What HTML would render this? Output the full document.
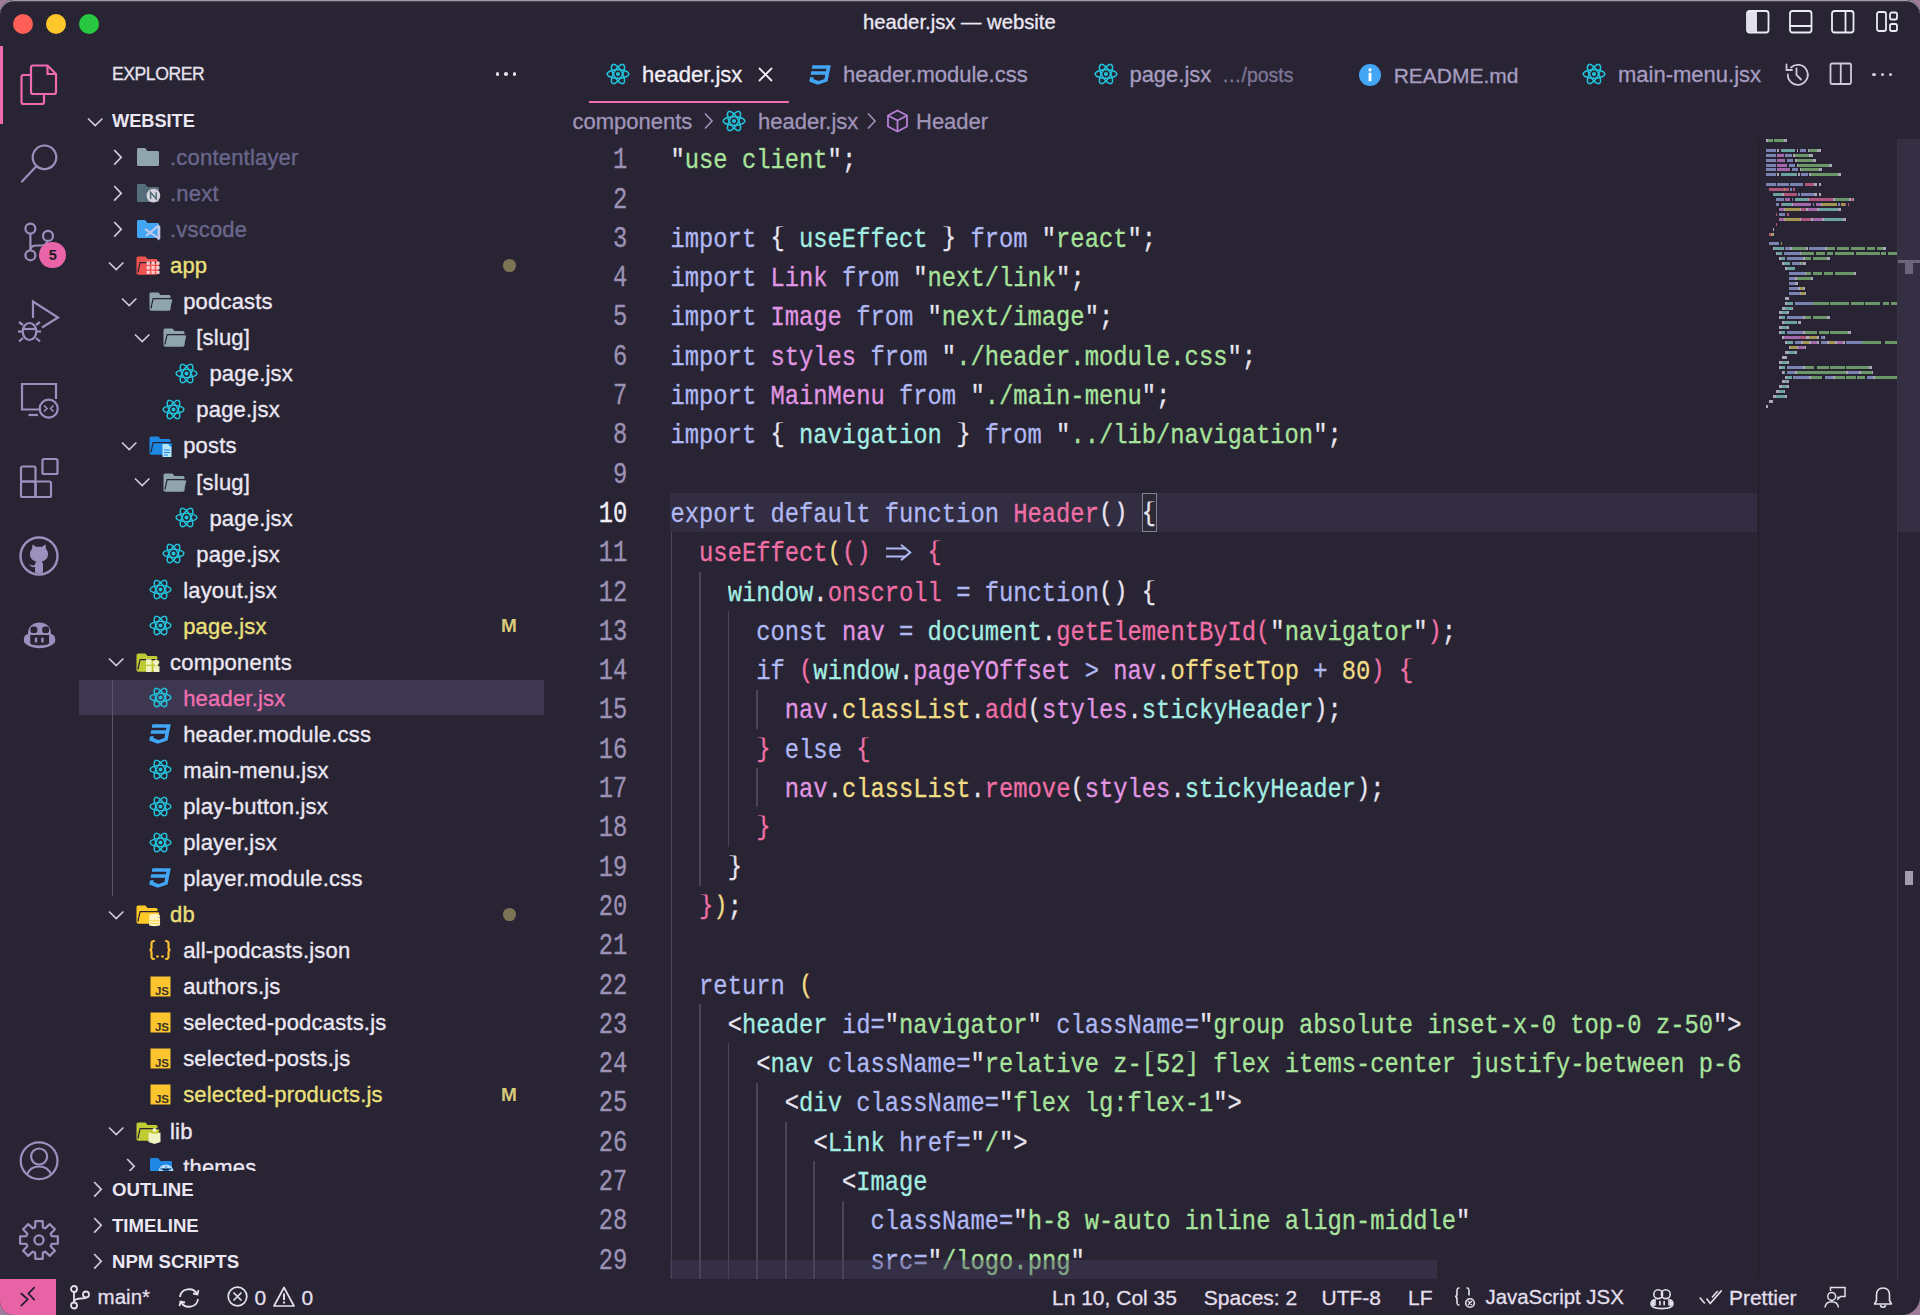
<!DOCTYPE html><html><head><meta charset="utf-8"><style>
html,body{margin:0;padding:0;width:1920px;height:1315px;overflow:hidden;background:#9e7d98;}
#win{position:absolute;left:0;top:0;width:1920px;height:1315px;background:#292434;border-radius:14px 14px 18px 14px;overflow:hidden;}
.t{position:absolute;white-space:pre;line-height:1;font-family:"Liberation Sans",sans-serif;}
.m{position:absolute;white-space:pre;font-family:"Liberation Mono",monospace;font-size:23.813px;line-height:1;transform-origin:0 18.24px;transform:scaleY(1.14);-webkit-text-stroke-width:0.25px;}
.ln{transform:scaleY(1.24);}
svg{position:absolute;overflow:visible;}
.r{position:absolute;}
</style></head><body>
<div id="win">

<div class="r" style="left:0;top:0;width:1920px;height:40px;border-radius:14px 14px 0 0;box-shadow:inset 0 1.2px 0 #a39daa"></div>
<div class="r" style="left:12.5px;top:13.6px;width:20.4px;height:20.4px;border-radius:50%;background:#fe5f57"></div>
<div class="r" style="left:45.5px;top:13.6px;width:20.4px;height:20.4px;border-radius:50%;background:#fdc62a"></div>
<div class="r" style="left:78.5px;top:13.6px;width:20.4px;height:20.4px;border-radius:50%;background:#28c840"></div>
<div class="t" style="left:863px;top:12.01px;font-size:20.3px;color:#ece8f4;font-weight:normal;letter-spacing:0px;-webkit-text-stroke:0.3px #ece8f4;">header.jsx — website</div>
<svg style="left:1746px;top:10px" width="24" height="24" viewBox="0 0 24 24"><rect x="1" y="1" width="21.5" height="21.5" rx="2.5" fill="none" stroke="#ecebf5" stroke-width="1.8"/><rect x="1.8" y="1.8" width="8" height="20" fill="#ecebf5" opacity="0.95"/><line x1="10" y1="1" x2="10" y2="22.5" stroke="#ecebf5" stroke-width="1.8"/></svg>
<svg style="left:1789px;top:10px" width="24" height="24" viewBox="0 0 24 24"><rect x="1" y="1" width="21.5" height="21.5" rx="2.5" fill="none" stroke="#ecebf5" stroke-width="1.8"/><line x1="1" y1="16" x2="22.5" y2="16" stroke="#ecebf5" stroke-width="1.8"/></svg>
<svg style="left:1831px;top:10px" width="24" height="24" viewBox="0 0 24 24"><rect x="1" y="1" width="21.5" height="21.5" rx="2.5" fill="none" stroke="#ecebf5" stroke-width="1.8"/><line x1="14.5" y1="1" x2="14.5" y2="22.5" stroke="#ecebf5" stroke-width="1.8"/></svg>
<svg style="left:1876px;top:10px" width="24" height="24" viewBox="0 0 24 24"><rect x="1" y="2" width="9" height="19" rx="2" fill="none" stroke="#ecebf5" stroke-width="1.8"/><rect x="14" y="2.5" width="7" height="7" rx="1.8" fill="none" stroke="#ecebf5" stroke-width="1.8"/><rect x="14" y="14" width="7" height="7" rx="1.8" fill="none" stroke="#ecebf5" stroke-width="1.8"/></svg>
<div class="r" style="left:0;top:46px;width:3px;height:78px;background:#f06ab0"></div>
<svg style="left:20px;top:63px" width="38" height="44" viewBox="0 0 38 44"><g fill="none" stroke="#f06ab0" stroke-width="2.2" stroke-linejoin="round">
<path d="M11.5 12 H3.5 a2 2 0 0 0 -2 2 V39 a2 2 0 0 0 2 2 H22 a2 2 0 0 0 2 -2 V32"/>
<path d="M13 2.5 H27.5 L36 11 V29 a2 2 0 0 1 -2 2 H13 a2 2 0 0 1 -2 -2 V4.5 a2 2 0 0 1 2 -2 Z"/>
<path d="M27.5 2.5 V11 H36"/></g></svg>
<svg style="left:18px;top:140px" width="44" height="46" viewBox="0 0 44 46"><g fill="none" stroke="#9b90bd" stroke-width="2.2" stroke-linecap="round"><circle cx="26.5" cy="17.3" r="11.8"/><line x1="18.5" y1="26" x2="4" y2="41.5"/></g></svg>
<svg style="left:20px;top:218px" width="44" height="50" viewBox="0 0 44 50"><g fill="none" stroke="#9b90bd" stroke-width="2.2"><circle cx="10.4" cy="10.6" r="5"/><circle cx="28" cy="17.9" r="5"/><circle cx="10.4" cy="37.3" r="5"/><line x1="10.4" y1="15.6" x2="10.4" y2="32.3"/><path d="M10.4 31 C11 28.5 13 27.5 17 27.5 H22 C24.5 27.5 26.5 25.5 27.5 22.9"/></g></svg>
<div class="r" style="left:39.4px;top:242.2px;width:26.2px;height:26.2px;border-radius:50%;background:#e964a8"></div>
<div class="t" style="left:39.6px;width:26.2px;text-align:center;top:247.92px;font-size:14.5px;color:#1e1a26;font-weight:bold">5</div>
<svg style="left:16px;top:298px" width="48" height="46" viewBox="0 0 48 46"><g fill="none" stroke="#9b90bd" stroke-width="2.2" stroke-linejoin="miter">
<path d="M17 20 V3.5 L42 19.5 L26 29.5"/>
<ellipse cx="13.5" cy="33.5" rx="6.8" ry="8.5"/><line x1="7" y1="31" x2="20" y2="31"/>
<line x1="6.5" y1="33.5" x2="2" y2="33.5"/><line x1="20.5" y1="33.5" x2="25" y2="33.5"/>
<line x1="7" y1="27" x2="3" y2="24"/><line x1="20" y1="27" x2="24" y2="24"/>
<line x1="7" y1="40" x2="3" y2="43.5"/><line x1="20" y1="40" x2="24" y2="43.5"/></g></svg>
<svg style="left:18px;top:380px" width="44" height="40" viewBox="0 0 44 40"><g fill="none" stroke="#9b90bd" stroke-width="2.2">
<path d="M23 29.5 H4 V4 H38 V19"/><line x1="10.5" y1="35" x2="20" y2="35"/><circle cx="30.7" cy="28.7" r="9"/>
<path d="M26 25.5 L29 28.5 L26 31.5 M35.5 25.5 L32.5 28.5 L35.5 31.5" stroke-width="1.6"/></g></svg>
<svg style="left:18px;top:456px" width="44" height="44" viewBox="0 0 44 44"><g fill="none" stroke="#9b90bd" stroke-width="2.2">
<rect x="3" y="10.5" width="14.5" height="15" rx="1.5"/><rect x="3" y="25.5" width="14.5" height="15.5" rx="1.5"/><rect x="17.5" y="25.5" width="15.5" height="15.5" rx="1.5"/><rect x="24.5" y="3" width="15" height="15" rx="1.5"/></g></svg>
<svg style="left:18px;top:535px" width="44" height="44" viewBox="0 0 44 44"><circle cx="21" cy="21" r="18.5" fill="none" stroke="#9b90bd" stroke-width="2.4"/>
<path d="M14 14 L14.5 9.5 L18.5 12 C20 11.6 22 11.6 23.5 12 L27.5 9.5 L28 14 C29.5 15.5 30 17 30 19 C30 23.5 27 26 23.5 26.5 C24.5 27.5 25 28.5 25 30 V37.5 C23.8 38 22.5 38.2 21 38.2 C19.5 38.2 18.2 38 17 37.5 V32 C15 32.5 12.5 32 11 29 C12.5 29.5 13.5 30.5 15 30.5 L17 30 C17 28.5 17.5 27.3 18.5 26.5 C15 26 12 23.5 12 19 C12 17 12.5 15.5 14 14 Z" fill="#9b90bd"/></svg>
<svg style="left:21px;top:619px" width="38" height="34" viewBox="0 0 38 34"><path d="M7 15 C7 7.5 12 3.6 18.5 3.6 C25 3.6 30 7.5 30 15 C33 15.5 34.3 18 34.3 21 C34.3 23.5 33 25 30 26.5 C26.5 28.3 22.5 29.2 18.5 29.2 C14.5 29.2 10.5 28.3 7 26.5 C4 25 2.8 23.5 2.8 21 C2.8 18 4 15.5 7 15 Z" fill="#9b90bd"/><g fill="#292434"><rect x="9.5" y="7.4" width="6.8" height="6.6" rx="2.6"/><rect x="21.2" y="7.4" width="6.9" height="6.6" rx="2.6"/><path d="M9.2 15.9 H28.1 V24 C28.1 25.6 24 26.4 18.6 26.4 C13.3 26.4 9.2 25.6 9.2 24 Z"/></g><g fill="#9b90bd"><rect x="13.8" y="18.5" width="2.4" height="5.1" rx="1.2"/><rect x="20.2" y="18.5" width="2.4" height="5.1" rx="1.2"/></g></svg>
<svg style="left:18px;top:1139px" width="44" height="44" viewBox="0 0 44 44"><g fill="none" stroke="#9b90bd" stroke-width="2.2"><circle cx="21.1" cy="21.7" r="18.4"/><circle cx="21.1" cy="17.5" r="8"/><path d="M9 36 C11 30 15.5 27.5 21.1 27.5 C26.7 27.5 31.2 30 33.2 36"/></g></svg>
<svg style="left:18px;top:1219px" width="44" height="44" viewBox="0 0 44 44"><g fill="none" stroke="#9b90bd" stroke-width="2.2" stroke-linejoin="round"><polygon points="17.10,8.39 17.37,2.15 24.63,2.15 24.90,8.39 27.16,9.32 31.77,5.10 36.90,10.23 32.68,14.84 33.61,17.10 39.85,17.37 39.85,24.63 33.61,24.90 32.68,27.16 36.90,31.77 31.77,36.90 27.16,32.68 24.90,33.61 24.63,39.85 17.37,39.85 17.10,33.61 14.84,32.68 10.23,36.90 5.10,31.77 9.32,27.16 8.39,24.90 2.15,24.63 2.15,17.37 8.39,17.10 9.32,14.84 5.10,10.23 10.23,5.10 14.84,9.32"/><circle cx="21" cy="21" r="4.6"/></g></svg>
<div class="t" style="left:112px;top:66.40px;font-size:17.6px;color:#e6e2ee;font-weight:normal;letter-spacing:-0.45px;-webkit-text-stroke:0.3px #e6e2ee;">EXPLORER</div>
<div class="r" style="left:495.7px;top:72.2px;width:3.6px;height:3.6px;border-radius:50%;background:#e2deea"></div>
<div class="r" style="left:504.2px;top:72.2px;width:3.6px;height:3.6px;border-radius:50%;background:#e2deea"></div>
<div class="r" style="left:512.7px;top:72.2px;width:3.6px;height:3.6px;border-radius:50%;background:#e2deea"></div>
<svg style="left:87px;top:116.5px" width="17" height="10" viewBox="0 0 17 10"><path d="M1 1.5 L8.2 8.5 L15.4 1.5" fill="none" stroke="#cfcadb" stroke-width="1.7"/></svg>
<div class="t" style="left:112px;top:112.39px;font-size:18.2px;color:#ebe7f3;font-weight:bold;letter-spacing:0px;">WEBSITE</div>
<div class="r" style="left:78px;top:139px;width:480px;height:1032px;overflow:hidden">
<div class="r" style="left:1px;top:540.5px;width:465px;height:35.8px;background:#3d3751"></div>
<div class="r" style="left:33.5px;top:541px;width:1.8px;height:216px;background:#5a5668"></div>
<svg style="left:34.50px;top:9.50px" width="10" height="17" viewBox="0 0 10 17"><path d="M1.2 1 L8.2 8.3 L1.2 15.6" fill="none" stroke="#cfcadb" stroke-width="1.7"/></svg>
<svg style="left:58.30px;top:8.00px" width="24" height="20" viewBox="0 0 24 20"><path d="M9 1 H2.5 C1.6 1 1 1.6 1 2.5 V17.5 C1 18.4 1.6 19 2.5 19 H21.5 C22.4 19 23 18.4 23 17.5 V5.5 C23 4.6 22.4 4 21.5 4 H11.5 Z" fill="#90a4ae"/></svg>
<div class="t" style="left:92.00px;top:8.02px;font-size:22px;color:#6a678c;font-weight:normal;letter-spacing:0.2px;-webkit-text-stroke:0.35px #6a678c;">.contentlayer</div>
<svg style="left:34.50px;top:45.56px" width="10" height="17" viewBox="0 0 10 17"><path d="M1.2 1 L8.2 8.3 L1.2 15.6" fill="none" stroke="#cfcadb" stroke-width="1.7"/></svg>
<svg style="left:58.30px;top:44.06px" width="24" height="20" viewBox="0 0 24 20"><path d="M9 1 H2.5 C1.6 1 1 1.6 1 2.5 V17.5 C1 18.4 1.6 19 2.5 19 H21.5 C22.4 19 23 18.4 23 17.5 V5.5 C23 4.6 22.4 4 21.5 4 H11.5 Z" fill="#546e7a"/><circle cx="17.4" cy="12.6" r="6.9" fill="#d7d3dc"/><path d="M14.6 16 V9.3 L20.2 16 V9.3" fill="none" stroke="#546e7a" stroke-width="1.5"/></svg>
<div class="t" style="left:92.00px;top:44.08px;font-size:22px;color:#6a678c;font-weight:normal;letter-spacing:0.2px;-webkit-text-stroke:0.35px #6a678c;">.next</div>
<svg style="left:34.50px;top:81.61px" width="10" height="17" viewBox="0 0 10 17"><path d="M1.2 1 L8.2 8.3 L1.2 15.6" fill="none" stroke="#cfcadb" stroke-width="1.7"/></svg>
<svg style="left:58.30px;top:80.11px" width="24" height="20" viewBox="0 0 24 20"><path d="M9 1 H2.5 C1.6 1 1 1.6 1 2.5 V17.5 C1 18.4 1.6 19 2.5 19 H21.5 C22.4 19 23 18.4 23 17.5 V5.5 C23 4.6 22.4 4 21.5 4 H11.5 Z" fill="#42a5f5"/><path d="M9 10.2 L23 19.5 M10 17.1 L22.6 6.6" stroke="#c5cae9" stroke-width="2" fill="none"/><path d="M21.6 5.6 L24.3 7 V20 L21.6 21.4 Z" fill="#c5cae9"/></svg>
<div class="t" style="left:92.00px;top:80.13px;font-size:22px;color:#6a678c;font-weight:normal;letter-spacing:0.2px;-webkit-text-stroke:0.35px #6a678c;">.vscode</div>
<svg style="left:30.00px;top:121.67px" width="17" height="10" viewBox="0 0 17 10"><path d="M1 1.5 L8.2 8.5 L15.4 1.5" fill="none" stroke="#cfcadb" stroke-width="1.7"/></svg>
<svg style="left:58.30px;top:117.17px" width="24" height="19" viewBox="0 0 24 19"><path d="M2 0.5 H9.5 L11.5 3 H20 A1.5 1.5 0 0 1 21.5 4.5 V17 A1.5 1.5 0 0 1 20 18.5 H2 A1.5 1.5 0 0 1 0.5 17 V2 A1.5 1.5 0 0 1 2 0.5 Z" fill="#ef5350"/><path d="M23.6 6.8 H4.2 L2 16.5" fill="none" stroke="#292434" stroke-width="1.4"/><path d="M4.6 7.6 H23.4 L21 17.3 A1.6 1.6 0 0 1 19.5 18.5 H2.2 Z" fill="#ef5350"/><g fill="#ffcdd2"><rect x="10.6" y="5.5" width="3.3" height="3.3" rx="0.5"/><rect x="10.6" y="10.1" width="3.3" height="3.3" rx="0.5"/><rect x="10.6" y="14.7" width="3.3" height="3.3" rx="0.5"/><rect x="15.399999999999999" y="5.5" width="3.3" height="3.3" rx="0.5"/><rect x="15.399999999999999" y="10.1" width="3.3" height="3.3" rx="0.5"/><rect x="15.399999999999999" y="14.7" width="3.3" height="3.3" rx="0.5"/><rect x="20.2" y="5.5" width="3.3" height="3.3" rx="0.5"/><rect x="20.2" y="10.1" width="3.3" height="3.3" rx="0.5"/><rect x="20.2" y="14.7" width="3.3" height="3.3" rx="0.5"/></g></svg>
<div class="t" style="left:92.00px;top:116.19px;font-size:22px;color:#ece07a;font-weight:normal;letter-spacing:0.2px;-webkit-text-stroke:0.35px #ece07a;">app</div>
<div class="r" style="left:424.90px;top:120.07px;width:12.8px;height:12.8px;border-radius:50%;background:#7d7456"></div>
<svg style="left:43.20px;top:157.72px" width="17" height="10" viewBox="0 0 17 10"><path d="M1 1.5 L8.2 8.5 L15.4 1.5" fill="none" stroke="#cfcadb" stroke-width="1.7"/></svg>
<svg style="left:71.45px;top:153.22px" width="24" height="19" viewBox="0 0 24 19"><path d="M2 0.5 H9.5 L11.5 3 H20 A1.5 1.5 0 0 1 21.5 4.5 V17 A1.5 1.5 0 0 1 20 18.5 H2 A1.5 1.5 0 0 1 0.5 17 V2 A1.5 1.5 0 0 1 2 0.5 Z" fill="#90a4ae"/><path d="M23.6 6.8 H4.2 L2 16.5" fill="none" stroke="#292434" stroke-width="1.4"/><path d="M4.6 7.6 H23.4 L21 17.3 A1.6 1.6 0 0 1 19.5 18.5 H2.2 Z" fill="#90a4ae"/></svg>
<div class="t" style="left:105.15px;top:152.25px;font-size:22px;color:#ebe7f3;font-weight:normal;letter-spacing:0.2px;-webkit-text-stroke:0.35px #ebe7f3;">podcasts</div>
<svg style="left:56.40px;top:193.78px" width="17" height="10" viewBox="0 0 17 10"><path d="M1 1.5 L8.2 8.5 L15.4 1.5" fill="none" stroke="#cfcadb" stroke-width="1.7"/></svg>
<svg style="left:84.60px;top:189.28px" width="24" height="19" viewBox="0 0 24 19"><path d="M2 0.5 H9.5 L11.5 3 H20 A1.5 1.5 0 0 1 21.5 4.5 V17 A1.5 1.5 0 0 1 20 18.5 H2 A1.5 1.5 0 0 1 0.5 17 V2 A1.5 1.5 0 0 1 2 0.5 Z" fill="#90a4ae"/><path d="M23.6 6.8 H4.2 L2 16.5" fill="none" stroke="#292434" stroke-width="1.4"/><path d="M4.6 7.6 H23.4 L21 17.3 A1.6 1.6 0 0 1 19.5 18.5 H2.2 Z" fill="#90a4ae"/></svg>
<div class="t" style="left:118.30px;top:188.30px;font-size:22px;color:#ebe7f3;font-weight:normal;letter-spacing:0.2px;-webkit-text-stroke:0.35px #ebe7f3;">[slug]</div>
<svg style="left:97.25px;top:222.84px" width="23" height="23" viewBox="0 0 24 24"><g fill="none" stroke="#22c2da" stroke-width="1.55"><ellipse cx="12" cy="12" rx="10.8" ry="4.3"/><ellipse cx="12" cy="12" rx="10.8" ry="4.3" transform="rotate(60 12 12)"/><ellipse cx="12" cy="12" rx="10.8" ry="4.3" transform="rotate(120 12 12)"/></g><circle cx="12" cy="12" r="2.1" fill="#22c2da"/></svg>
<div class="t" style="left:131.45px;top:224.36px;font-size:22px;color:#ebe7f3;font-weight:normal;letter-spacing:0.2px;-webkit-text-stroke:0.35px #ebe7f3;">page.jsx</div>
<svg style="left:84.10px;top:258.89px" width="23" height="23" viewBox="0 0 24 24"><g fill="none" stroke="#22c2da" stroke-width="1.55"><ellipse cx="12" cy="12" rx="10.8" ry="4.3"/><ellipse cx="12" cy="12" rx="10.8" ry="4.3" transform="rotate(60 12 12)"/><ellipse cx="12" cy="12" rx="10.8" ry="4.3" transform="rotate(120 12 12)"/></g><circle cx="12" cy="12" r="2.1" fill="#22c2da"/></svg>
<div class="t" style="left:118.30px;top:260.41px;font-size:22px;color:#ebe7f3;font-weight:normal;letter-spacing:0.2px;-webkit-text-stroke:0.35px #ebe7f3;">page.jsx</div>
<svg style="left:43.20px;top:301.95px" width="17" height="10" viewBox="0 0 17 10"><path d="M1 1.5 L8.2 8.5 L15.4 1.5" fill="none" stroke="#cfcadb" stroke-width="1.7"/></svg>
<svg style="left:71.45px;top:297.45px" width="24" height="19" viewBox="0 0 24 19"><path d="M2 0.5 H9.5 L11.5 3 H20 A1.5 1.5 0 0 1 21.5 4.5 V17 A1.5 1.5 0 0 1 20 18.5 H2 A1.5 1.5 0 0 1 0.5 17 V2 A1.5 1.5 0 0 1 2 0.5 Z" fill="#1e88e5"/><path d="M23.6 6.8 H4.2 L2 16.5" fill="none" stroke="#292434" stroke-width="1.4"/><path d="M4.6 7.6 H23.4 L21 17.3 A1.6 1.6 0 0 1 19.5 18.5 H2.2 Z" fill="#1e88e5"/><path d="M13.5 8 H19 L22.5 11.5 V21 H13.5 Z" fill="#b3e5fc"/><path d="M15 14 H21 M15 16.5 H21 M15 19 H19" stroke="#1e88e5" stroke-width="1"/></svg>
<div class="t" style="left:105.15px;top:296.47px;font-size:22px;color:#ebe7f3;font-weight:normal;letter-spacing:0.2px;-webkit-text-stroke:0.35px #ebe7f3;">posts</div>
<svg style="left:56.40px;top:338.00px" width="17" height="10" viewBox="0 0 17 10"><path d="M1 1.5 L8.2 8.5 L15.4 1.5" fill="none" stroke="#cfcadb" stroke-width="1.7"/></svg>
<svg style="left:84.60px;top:333.50px" width="24" height="19" viewBox="0 0 24 19"><path d="M2 0.5 H9.5 L11.5 3 H20 A1.5 1.5 0 0 1 21.5 4.5 V17 A1.5 1.5 0 0 1 20 18.5 H2 A1.5 1.5 0 0 1 0.5 17 V2 A1.5 1.5 0 0 1 2 0.5 Z" fill="#90a4ae"/><path d="M23.6 6.8 H4.2 L2 16.5" fill="none" stroke="#292434" stroke-width="1.4"/><path d="M4.6 7.6 H23.4 L21 17.3 A1.6 1.6 0 0 1 19.5 18.5 H2.2 Z" fill="#90a4ae"/></svg>
<div class="t" style="left:118.30px;top:332.53px;font-size:22px;color:#ebe7f3;font-weight:normal;letter-spacing:0.2px;-webkit-text-stroke:0.35px #ebe7f3;">[slug]</div>
<svg style="left:97.25px;top:367.06px" width="23" height="23" viewBox="0 0 24 24"><g fill="none" stroke="#22c2da" stroke-width="1.55"><ellipse cx="12" cy="12" rx="10.8" ry="4.3"/><ellipse cx="12" cy="12" rx="10.8" ry="4.3" transform="rotate(60 12 12)"/><ellipse cx="12" cy="12" rx="10.8" ry="4.3" transform="rotate(120 12 12)"/></g><circle cx="12" cy="12" r="2.1" fill="#22c2da"/></svg>
<div class="t" style="left:131.45px;top:368.58px;font-size:22px;color:#ebe7f3;font-weight:normal;letter-spacing:0.2px;-webkit-text-stroke:0.35px #ebe7f3;">page.jsx</div>
<svg style="left:84.10px;top:403.12px" width="23" height="23" viewBox="0 0 24 24"><g fill="none" stroke="#22c2da" stroke-width="1.55"><ellipse cx="12" cy="12" rx="10.8" ry="4.3"/><ellipse cx="12" cy="12" rx="10.8" ry="4.3" transform="rotate(60 12 12)"/><ellipse cx="12" cy="12" rx="10.8" ry="4.3" transform="rotate(120 12 12)"/></g><circle cx="12" cy="12" r="2.1" fill="#22c2da"/></svg>
<div class="t" style="left:118.30px;top:404.64px;font-size:22px;color:#ebe7f3;font-weight:normal;letter-spacing:0.2px;-webkit-text-stroke:0.35px #ebe7f3;">page.jsx</div>
<svg style="left:70.95px;top:439.17px" width="23" height="23" viewBox="0 0 24 24"><g fill="none" stroke="#22c2da" stroke-width="1.55"><ellipse cx="12" cy="12" rx="10.8" ry="4.3"/><ellipse cx="12" cy="12" rx="10.8" ry="4.3" transform="rotate(60 12 12)"/><ellipse cx="12" cy="12" rx="10.8" ry="4.3" transform="rotate(120 12 12)"/></g><circle cx="12" cy="12" r="2.1" fill="#22c2da"/></svg>
<div class="t" style="left:105.15px;top:440.69px;font-size:22px;color:#ebe7f3;font-weight:normal;letter-spacing:0.2px;-webkit-text-stroke:0.35px #ebe7f3;">layout.jsx</div>
<svg style="left:70.95px;top:475.23px" width="23" height="23" viewBox="0 0 24 24"><g fill="none" stroke="#22c2da" stroke-width="1.55"><ellipse cx="12" cy="12" rx="10.8" ry="4.3"/><ellipse cx="12" cy="12" rx="10.8" ry="4.3" transform="rotate(60 12 12)"/><ellipse cx="12" cy="12" rx="10.8" ry="4.3" transform="rotate(120 12 12)"/></g><circle cx="12" cy="12" r="2.1" fill="#22c2da"/></svg>
<div class="t" style="left:105.15px;top:476.75px;font-size:22px;color:#ece07a;font-weight:normal;letter-spacing:0.2px;-webkit-text-stroke:0.35px #ece07a;">page.jsx</div>
<div class="t" style="left:423.00px;top:477.44px;font-size:19px;color:#d9cb7a;font-weight:bold;letter-spacing:0px;">M</div>
<svg style="left:30.00px;top:518.28px" width="17" height="10" viewBox="0 0 17 10"><path d="M1 1.5 L8.2 8.5 L15.4 1.5" fill="none" stroke="#cfcadb" stroke-width="1.7"/></svg>
<svg style="left:58.30px;top:513.78px" width="24" height="19" viewBox="0 0 24 19"><path d="M2 0.5 H9.5 L11.5 3 H20 A1.5 1.5 0 0 1 21.5 4.5 V17 A1.5 1.5 0 0 1 20 18.5 H2 A1.5 1.5 0 0 1 0.5 17 V2 A1.5 1.5 0 0 1 2 0.5 Z" fill="#c0ca33"/><path d="M23.6 6.8 H4.2 L2 16.5" fill="none" stroke="#292434" stroke-width="1.4"/><path d="M4.6 7.6 H23.4 L21 17.3 A1.6 1.6 0 0 1 19.5 18.5 H2.2 Z" fill="#c0ca33"/><g fill="#f0f4c3"><rect x="10" y="6.2" width="5.5" height="5.5"/><rect x="10" y="13" width="5.6" height="6"/><rect x="17.7" y="13.2" width="5.8" height="5.8"/><path d="M20 6 L23.6 9.6 L20 13.2 L16.4 9.6 Z"/></g></svg>
<div class="t" style="left:92.00px;top:512.81px;font-size:22px;color:#ebe7f3;font-weight:normal;letter-spacing:0.2px;-webkit-text-stroke:0.35px #ebe7f3;">components</div>
<svg style="left:70.95px;top:547.34px" width="23" height="23" viewBox="0 0 24 24"><g fill="none" stroke="#22c2da" stroke-width="1.55"><ellipse cx="12" cy="12" rx="10.8" ry="4.3"/><ellipse cx="12" cy="12" rx="10.8" ry="4.3" transform="rotate(60 12 12)"/><ellipse cx="12" cy="12" rx="10.8" ry="4.3" transform="rotate(120 12 12)"/></g><circle cx="12" cy="12" r="2.1" fill="#22c2da"/></svg>
<div class="t" style="left:105.15px;top:548.86px;font-size:22px;color:#f06fb0;font-weight:normal;letter-spacing:0.2px;-webkit-text-stroke:0.35px #f06fb0;">header.jsx</div>
<svg style="left:69.45px;top:581.90px" width="26" height="26" viewBox="0 0 24 24"><path d="M5,3L4.35,6.34H17.94L17.5,8.5H3.92L3.26,11.83H16.85L16.09,15.64L10.61,17.45L5.86,15.64L6.19,14H2.85L2.06,18L9.91,21L18.96,18L20.16,11.97L20.4,10.76L21.94,3H5Z" fill="#42a5f5"/></svg>
<div class="t" style="left:105.15px;top:584.92px;font-size:22px;color:#ebe7f3;font-weight:normal;letter-spacing:0.2px;-webkit-text-stroke:0.35px #ebe7f3;">header.module.css</div>
<svg style="left:70.95px;top:619.45px" width="23" height="23" viewBox="0 0 24 24"><g fill="none" stroke="#22c2da" stroke-width="1.55"><ellipse cx="12" cy="12" rx="10.8" ry="4.3"/><ellipse cx="12" cy="12" rx="10.8" ry="4.3" transform="rotate(60 12 12)"/><ellipse cx="12" cy="12" rx="10.8" ry="4.3" transform="rotate(120 12 12)"/></g><circle cx="12" cy="12" r="2.1" fill="#22c2da"/></svg>
<div class="t" style="left:105.15px;top:620.97px;font-size:22px;color:#ebe7f3;font-weight:normal;letter-spacing:0.2px;-webkit-text-stroke:0.35px #ebe7f3;">main-menu.jsx</div>
<svg style="left:70.95px;top:655.51px" width="23" height="23" viewBox="0 0 24 24"><g fill="none" stroke="#22c2da" stroke-width="1.55"><ellipse cx="12" cy="12" rx="10.8" ry="4.3"/><ellipse cx="12" cy="12" rx="10.8" ry="4.3" transform="rotate(60 12 12)"/><ellipse cx="12" cy="12" rx="10.8" ry="4.3" transform="rotate(120 12 12)"/></g><circle cx="12" cy="12" r="2.1" fill="#22c2da"/></svg>
<div class="t" style="left:105.15px;top:657.03px;font-size:22px;color:#ebe7f3;font-weight:normal;letter-spacing:0.2px;-webkit-text-stroke:0.35px #ebe7f3;">play-button.jsx</div>
<svg style="left:70.95px;top:691.56px" width="23" height="23" viewBox="0 0 24 24"><g fill="none" stroke="#22c2da" stroke-width="1.55"><ellipse cx="12" cy="12" rx="10.8" ry="4.3"/><ellipse cx="12" cy="12" rx="10.8" ry="4.3" transform="rotate(60 12 12)"/><ellipse cx="12" cy="12" rx="10.8" ry="4.3" transform="rotate(120 12 12)"/></g><circle cx="12" cy="12" r="2.1" fill="#22c2da"/></svg>
<div class="t" style="left:105.15px;top:693.09px;font-size:22px;color:#ebe7f3;font-weight:normal;letter-spacing:0.2px;-webkit-text-stroke:0.35px #ebe7f3;">player.jsx</div>
<svg style="left:69.45px;top:726.12px" width="26" height="26" viewBox="0 0 24 24"><path d="M5,3L4.35,6.34H17.94L17.5,8.5H3.92L3.26,11.83H16.85L16.09,15.64L10.61,17.45L5.86,15.64L6.19,14H2.85L2.06,18L9.91,21L18.96,18L20.16,11.97L20.4,10.76L21.94,3H5Z" fill="#42a5f5"/></svg>
<div class="t" style="left:105.15px;top:729.14px;font-size:22px;color:#ebe7f3;font-weight:normal;letter-spacing:0.2px;-webkit-text-stroke:0.35px #ebe7f3;">player.module.css</div>
<svg style="left:30.00px;top:770.68px" width="17" height="10" viewBox="0 0 17 10"><path d="M1 1.5 L8.2 8.5 L15.4 1.5" fill="none" stroke="#cfcadb" stroke-width="1.7"/></svg>
<svg style="left:58.30px;top:766.18px" width="24" height="19" viewBox="0 0 24 19"><path d="M2 0.5 H9.5 L11.5 3 H20 A1.5 1.5 0 0 1 21.5 4.5 V17 A1.5 1.5 0 0 1 20 18.5 H2 A1.5 1.5 0 0 1 0.5 17 V2 A1.5 1.5 0 0 1 2 0.5 Z" fill="#ffca28"/><path d="M23.6 6.8 H4.2 L2 16.5" fill="none" stroke="#292434" stroke-width="1.4"/><path d="M4.6 7.6 H23.4 L21 17.3 A1.6 1.6 0 0 1 19.5 18.5 H2.2 Z" fill="#ffca28"/><g fill="#fff3c4"><ellipse cx="18.5" cy="11" rx="5.5" ry="2.3"/><path d="M13 12 V20 C13 21.5 24 21.5 24 20 V12 C24 13.5 13 13.5 13 12 Z"/></g><path d="M13 14.8 C13 16.3 24 16.3 24 14.8 M13 17.6 C13 19.1 24 19.1 24 17.6" stroke="#ffca28" stroke-width="0.9" fill="none"/></svg>
<div class="t" style="left:92.00px;top:765.20px;font-size:22px;color:#ece07a;font-weight:normal;letter-spacing:0.2px;-webkit-text-stroke:0.35px #ece07a;">db</div>
<div class="r" style="left:424.90px;top:769.08px;width:12.8px;height:12.8px;border-radius:50%;background:#7d7456"></div>
<svg style="left:70.45px;top:800.23px" width="24" height="22" viewBox="0 0 24 22"><g fill="none" stroke="#f9c02f" stroke-width="2.2" stroke-linecap="round"><path d="M6 2 C3.5 2 3.5 3.5 3.5 6 V8.5 C3.5 10 2.8 11 1.5 11 C2.8 11 3.5 12 3.5 13.5 V16 C3.5 18.5 3.5 20 6 20"/><path d="M18 2 C20.5 2 20.5 3.5 20.5 6 V8.5 C20.5 10 21.2 11 22.5 11 C21.2 11 20.5 12 20.5 13.5 V16 C20.5 18.5 20.5 20 18 20"/></g><circle cx="9.5" cy="17.5" r="1.3" fill="#f9c02f"/><circle cx="14.5" cy="17.5" r="1.3" fill="#f9c02f"/></svg>
<div class="t" style="left:105.15px;top:801.25px;font-size:22px;color:#ebe7f3;font-weight:normal;letter-spacing:0.2px;-webkit-text-stroke:0.35px #ebe7f3;">all-podcasts.json</div>
<svg style="left:72.45px;top:837.29px" width="21" height="21" viewBox="0 0 21 21"><rect x="0.5" y="0.5" width="20" height="20" fill="#fcc42e"/><text x="19" y="18.5" text-anchor="end" font-family="Liberation Sans" font-size="11.5" font-weight="bold" fill="#3a3428">JS</text></svg>
<div class="t" style="left:105.15px;top:837.31px;font-size:22px;color:#ebe7f3;font-weight:normal;letter-spacing:0.2px;-webkit-text-stroke:0.35px #ebe7f3;">authors.js</div>
<svg style="left:72.45px;top:873.34px" width="21" height="21" viewBox="0 0 21 21"><rect x="0.5" y="0.5" width="20" height="20" fill="#fcc42e"/><text x="19" y="18.5" text-anchor="end" font-family="Liberation Sans" font-size="11.5" font-weight="bold" fill="#3a3428">JS</text></svg>
<div class="t" style="left:105.15px;top:873.37px;font-size:22px;color:#ebe7f3;font-weight:normal;letter-spacing:0.2px;-webkit-text-stroke:0.35px #ebe7f3;">selected-podcasts.js</div>
<svg style="left:72.45px;top:909.40px" width="21" height="21" viewBox="0 0 21 21"><rect x="0.5" y="0.5" width="20" height="20" fill="#fcc42e"/><text x="19" y="18.5" text-anchor="end" font-family="Liberation Sans" font-size="11.5" font-weight="bold" fill="#3a3428">JS</text></svg>
<div class="t" style="left:105.15px;top:909.42px;font-size:22px;color:#ebe7f3;font-weight:normal;letter-spacing:0.2px;-webkit-text-stroke:0.35px #ebe7f3;">selected-posts.js</div>
<svg style="left:72.45px;top:945.46px" width="21" height="21" viewBox="0 0 21 21"><rect x="0.5" y="0.5" width="20" height="20" fill="#fcc42e"/><text x="19" y="18.5" text-anchor="end" font-family="Liberation Sans" font-size="11.5" font-weight="bold" fill="#3a3428">JS</text></svg>
<div class="t" style="left:105.15px;top:945.48px;font-size:22px;color:#ece07a;font-weight:normal;letter-spacing:0.2px;-webkit-text-stroke:0.35px #ece07a;">selected-products.js</div>
<div class="t" style="left:423.00px;top:946.17px;font-size:19px;color:#d9cb7a;font-weight:bold;letter-spacing:0px;">M</div>
<svg style="left:30.00px;top:987.01px" width="17" height="10" viewBox="0 0 17 10"><path d="M1 1.5 L8.2 8.5 L15.4 1.5" fill="none" stroke="#cfcadb" stroke-width="1.7"/></svg>
<svg style="left:58.30px;top:982.51px" width="24" height="19" viewBox="0 0 24 19"><path d="M2 0.5 H9.5 L11.5 3 H20 A1.5 1.5 0 0 1 21.5 4.5 V17 A1.5 1.5 0 0 1 20 18.5 H2 A1.5 1.5 0 0 1 0.5 17 V2 A1.5 1.5 0 0 1 2 0.5 Z" fill="#c0ca33"/><path d="M23.6 6.8 H4.2 L2 16.5" fill="none" stroke="#292434" stroke-width="1.4"/><path d="M4.6 7.6 H23.4 L21 17.3 A1.6 1.6 0 0 1 19.5 18.5 H2.2 Z" fill="#c0ca33"/><path d="M12.5 10.5 L18.5 12 L24.5 10.5 V20 L18.5 22 L12.5 20 Z" fill="#f0f4c3"/><circle cx="18.5" cy="8" r="2" fill="#f0f4c3"/></svg>
<div class="t" style="left:92.00px;top:981.53px;font-size:22px;color:#ebe7f3;font-weight:normal;letter-spacing:0.2px;-webkit-text-stroke:0.35px #ebe7f3;">lib</div>
<svg style="left:47.70px;top:1019.07px" width="10" height="17" viewBox="0 0 10 17"><path d="M1.2 1 L8.2 8.3 L1.2 15.6" fill="none" stroke="#cfcadb" stroke-width="1.7"/></svg>
<svg style="left:71.45px;top:1017.57px" width="24" height="20" viewBox="0 0 24 20"><path d="M9 1 H2.5 C1.6 1 1 1.6 1 2.5 V17.5 C1 18.4 1.6 19 2.5 19 H21.5 C22.4 19 23 18.4 23 17.5 V5.5 C23 4.6 22.4 4 21.5 4 H11.5 Z" fill="#1e88e5"/><circle cx="17" cy="14.8" r="7.4" fill="#bbdefb"/><path d="M17 8.5 V14.8 M11.5 11.5 L17 14.8 L22.5 11.5" stroke="#1e88e5" stroke-width="1.1"/></svg>
<div class="t" style="left:105.15px;top:1017.59px;font-size:22px;color:#ebe7f3;font-weight:normal;letter-spacing:0.2px;-webkit-text-stroke:0.35px #ebe7f3;">themes</div>
</div>
<svg style="left:93px;top:1180.5px" width="10" height="17" viewBox="0 0 10 17"><path d="M1.2 1 L8.2 8.3 L1.2 15.6" fill="none" stroke="#cfcadb" stroke-width="1.7"/></svg>
<div class="t" style="left:112px;top:1180.75px;font-size:18.6px;color:#ebe7f3;font-weight:bold;letter-spacing:0px;">OUTLINE</div>
<svg style="left:93px;top:1216.5px" width="10" height="17" viewBox="0 0 10 17"><path d="M1.2 1 L8.2 8.3 L1.2 15.6" fill="none" stroke="#cfcadb" stroke-width="1.7"/></svg>
<div class="t" style="left:112px;top:1216.75px;font-size:18.6px;color:#ebe7f3;font-weight:bold;letter-spacing:0px;">TIMELINE</div>
<svg style="left:93px;top:1252.5px" width="10" height="17" viewBox="0 0 10 17"><path d="M1.2 1 L8.2 8.3 L1.2 15.6" fill="none" stroke="#cfcadb" stroke-width="1.7"/></svg>
<div class="t" style="left:112px;top:1252.75px;font-size:18.6px;color:#ebe7f3;font-weight:bold;letter-spacing:0px;">NPM SCRIPTS</div>
<svg style="left:605.8px;top:61.7px" width="24" height="24" viewBox="0 0 24 24"><g fill="none" stroke="#22c2da" stroke-width="1.55"><ellipse cx="12" cy="12" rx="10.8" ry="4.3"/><ellipse cx="12" cy="12" rx="10.8" ry="4.3" transform="rotate(60 12 12)"/><ellipse cx="12" cy="12" rx="10.8" ry="4.3" transform="rotate(120 12 12)"/></g><circle cx="12" cy="12" r="2.1" fill="#22c2da"/></svg>
<div class="t" style="left:642px;top:63.97px;font-size:22px;color:#f2eef8;font-weight:normal;letter-spacing:0px;-webkit-text-stroke:0.3px #f2eef8;">header.jsx</div>
<svg style="left:757px;top:66px" width="17" height="17" viewBox="0 0 17 17"><path d="M2 2 L15 15 M15 2 L2 15" stroke="#f2eef8" stroke-width="1.8"/></svg>
<div class="r" style="left:589px;top:101px;width:200px;height:2.4px;background:#f06ab0"></div>
<svg style="left:807px;top:61.5px" width="26" height="26" viewBox="0 0 24 24"><path d="M5,3L4.35,6.34H17.94L17.5,8.5H3.92L3.26,11.83H16.85L16.09,15.64L10.61,17.45L5.86,15.64L6.19,14H2.85L2.06,18L9.91,21L18.96,18L20.16,11.97L20.4,10.76L21.94,3H5Z" fill="#42a5f5"/></svg>
<div class="t" style="left:843px;top:63.97px;font-size:22px;color:#a69dc0;font-weight:normal;letter-spacing:0px;-webkit-text-stroke:0.3px #a69dc0;">header.module.css</div>
<svg style="left:1093.5px;top:61.7px" width="24" height="24" viewBox="0 0 24 24"><g fill="none" stroke="#22c2da" stroke-width="1.55"><ellipse cx="12" cy="12" rx="10.8" ry="4.3"/><ellipse cx="12" cy="12" rx="10.8" ry="4.3" transform="rotate(60 12 12)"/><ellipse cx="12" cy="12" rx="10.8" ry="4.3" transform="rotate(120 12 12)"/></g><circle cx="12" cy="12" r="2.1" fill="#22c2da"/></svg>
<div class="t" style="left:1129.4px;top:63.97px;font-size:22px;color:#a69dc0;font-weight:normal;letter-spacing:0px;-webkit-text-stroke:0.3px #a69dc0;">page.jsx</div>
<div class="t" style="left:1222px;top:66.09px;font-size:19.5px;color:#7f7799;font-weight:normal;letter-spacing:0px;-webkit-text-stroke:0.3px #7f7799;">…/posts</div>
<svg style="left:1358px;top:63px" width="24" height="24" viewBox="0 0 24 24"><circle cx="12" cy="12" r="11" fill="#42a5f5"/><circle cx="12" cy="6.8" r="1.6" fill="#fff"/><rect x="10.6" y="9.8" width="2.8" height="8.5" fill="#fff"/></svg>
<div class="t" style="left:1393.7px;top:64.82px;font-size:21px;color:#a69dc0;font-weight:normal;letter-spacing:0px;-webkit-text-stroke:0.3px #a69dc0;">README.md</div>
<svg style="left:1581.5px;top:61.7px" width="24" height="24" viewBox="0 0 24 24"><g fill="none" stroke="#22c2da" stroke-width="1.55"><ellipse cx="12" cy="12" rx="10.8" ry="4.3"/><ellipse cx="12" cy="12" rx="10.8" ry="4.3" transform="rotate(60 12 12)"/><ellipse cx="12" cy="12" rx="10.8" ry="4.3" transform="rotate(120 12 12)"/></g><circle cx="12" cy="12" r="2.1" fill="#22c2da"/></svg>
<div class="t" style="left:1618px;top:63.97px;font-size:22px;color:#a69dc0;font-weight:normal;letter-spacing:0px;-webkit-text-stroke:0.3px #a69dc0;">main-menu.jsx</div>
<svg style="left:1784px;top:62px" width="26" height="26" viewBox="0 0 26 26"><g fill="none" stroke="#cfc9dc" stroke-width="1.8" stroke-linecap="round"><path d="M3.8 12.5 A10 10 0 1 0 7 5.5"/><path d="M2.5 2.5 V8 H8"/><path d="M12.5 6.5 V13 L17 17.5"/></g></svg>
<svg style="left:1829px;top:62px" width="24" height="24" viewBox="0 0 24 24"><g fill="none" stroke="#cfc9dc" stroke-width="1.8"><rect x="1.5" y="1.5" width="20.5" height="20.5" rx="1.5"/><line x1="11.75" y1="1.5" x2="11.75" y2="22"/></g></svg>
<div class="r" style="left:1872.2px;top:72.5px;width:3.6px;height:3.6px;border-radius:50%;background:#cfc9dc"></div>
<div class="r" style="left:1880.5px;top:72.5px;width:3.6px;height:3.6px;border-radius:50%;background:#cfc9dc"></div>
<div class="r" style="left:1888.7px;top:72.5px;width:3.6px;height:3.6px;border-radius:50%;background:#cfc9dc"></div>
<div class="t" style="left:572.5px;top:110.77px;font-size:22px;color:#a095b9;font-weight:normal;letter-spacing:0px;-webkit-text-stroke:0.3px #a095b9;">components</div>
<svg style="left:703px;top:112px" width="11" height="18" viewBox="0 0 11 18"><path d="M2 1.5 L9 9 L2 16.5" fill="none" stroke="#a095b9" stroke-width="1.6"/></svg>
<svg style="left:722px;top:109px" width="24" height="24" viewBox="0 0 24 24"><g fill="none" stroke="#22c2da" stroke-width="1.55"><ellipse cx="12" cy="12" rx="10.8" ry="4.3"/><ellipse cx="12" cy="12" rx="10.8" ry="4.3" transform="rotate(60 12 12)"/><ellipse cx="12" cy="12" rx="10.8" ry="4.3" transform="rotate(120 12 12)"/></g><circle cx="12" cy="12" r="2.1" fill="#22c2da"/></svg>
<div class="t" style="left:758px;top:110.77px;font-size:22px;color:#a095b9;font-weight:normal;letter-spacing:0px;-webkit-text-stroke:0.3px #a095b9;">header.jsx</div>
<svg style="left:866px;top:112px" width="11" height="18" viewBox="0 0 11 18"><path d="M2 1.5 L9 9 L2 16.5" fill="none" stroke="#a095b9" stroke-width="1.6"/></svg>
<svg style="left:886px;top:108.5px" width="23" height="24" viewBox="0 0 23 24"><g fill="none" stroke="#b77fd8" stroke-width="1.8" stroke-linejoin="round"><path d="M11.5 1.5 L21 6.5 V17.5 L11.5 22.5 L2 17.5 V6.5 Z"/><path d="M2 6.5 L11.5 11.5 L21 6.5 M11.5 11.5 V22.5"/></g></svg>
<div class="t" style="left:916px;top:110.77px;font-size:22px;color:#a095b9;font-weight:normal;letter-spacing:0px;-webkit-text-stroke:0.3px #a095b9;">Header</div>
<div class="r" style="left:670px;top:493.10px;width:1087px;height:38.70px;background:#322d40"></div>
<div class="r" style="left:1142.17px;top:493.10px;width:14.6px;height:38.70px;box-sizing:border-box;border:1.7px solid #858092;background:#2c2a36"></div>
<div class="r" style="left:670.50px;top:532.40px;width:1.8px;height:746.70px;background:#4a4458"></div>
<div class="r" style="left:699.08px;top:571.70px;width:1.8px;height:314.40px;background:#4a4458"></div>
<div class="r" style="left:727.66px;top:611.00px;width:1.8px;height:235.80px;background:#4a4458"></div>
<div class="r" style="left:756.24px;top:689.60px;width:1.8px;height:39.30px;background:#4a4458"></div>
<div class="r" style="left:756.24px;top:768.20px;width:1.8px;height:39.30px;background:#4a4458"></div>
<div class="r" style="left:699.08px;top:1004.00px;width:1.8px;height:275.10px;background:#4a4458"></div>
<div class="r" style="left:727.66px;top:1043.30px;width:1.8px;height:235.80px;background:#4a4458"></div>
<div class="r" style="left:756.24px;top:1082.60px;width:1.8px;height:196.50px;background:#4a4458"></div>
<div class="r" style="left:784.82px;top:1121.90px;width:1.8px;height:157.20px;background:#4a4458"></div>
<div class="r" style="left:813.40px;top:1161.20px;width:1.8px;height:117.90px;background:#4a4458"></div>
<div class="r" style="left:841.98px;top:1200.50px;width:1.8px;height:78.60px;background:#4a4458"></div>
<div class="m ln" style="left:613.01px;top:150.26px;color:#9c92b5">1</div>
<div class="m" style="left:670.50px;top:150.26px;width:1087.00px;overflow:hidden"><span style="color:#e8e4ef">&quot;</span><span style="color:#a8e39c">use client</span><span style="color:#e8e4ef">&quot;</span><span style="color:#e8e4ef">;</span></div>
<div class="m ln" style="left:613.01px;top:189.56px;color:#9c92b5">2</div>
<div class="m ln" style="left:613.01px;top:228.86px;color:#9c92b5">3</div>
<div class="m" style="left:670.50px;top:228.86px;width:1087.00px;overflow:hidden"><span style="color:#b0b8f3">import</span><span style="color:#e8e4ef"> <span style="position:relative;top:-2.2px">{</span> </span><span style="color:#a4ede2">useEffect</span><span style="color:#e8e4ef"> <span style="position:relative;top:-2.2px">}</span> </span><span style="color:#b0b8f3">from</span><span style="color:#e8e4ef"> </span><span style="color:#e8e4ef">&quot;</span><span style="color:#a8e39c">react</span><span style="color:#e8e4ef">&quot;</span><span style="color:#e8e4ef">;</span></div>
<div class="m ln" style="left:613.01px;top:268.16px;color:#9c92b5">4</div>
<div class="m" style="left:670.50px;top:268.16px;width:1087.00px;overflow:hidden"><span style="color:#b0b8f3">import</span><span style="color:#e8e4ef"> </span><span style="color:#e096e3">Link</span><span style="color:#e8e4ef"> </span><span style="color:#b0b8f3">from</span><span style="color:#e8e4ef"> </span><span style="color:#e8e4ef">&quot;</span><span style="color:#a8e39c">next/link</span><span style="color:#e8e4ef">&quot;</span><span style="color:#e8e4ef">;</span></div>
<div class="m ln" style="left:613.01px;top:307.46px;color:#9c92b5">5</div>
<div class="m" style="left:670.50px;top:307.46px;width:1087.00px;overflow:hidden"><span style="color:#b0b8f3">import</span><span style="color:#e8e4ef"> </span><span style="color:#e096e3">Image</span><span style="color:#e8e4ef"> </span><span style="color:#b0b8f3">from</span><span style="color:#e8e4ef"> </span><span style="color:#e8e4ef">&quot;</span><span style="color:#a8e39c">next/image</span><span style="color:#e8e4ef">&quot;</span><span style="color:#e8e4ef">;</span></div>
<div class="m ln" style="left:613.01px;top:346.76px;color:#9c92b5">6</div>
<div class="m" style="left:670.50px;top:346.76px;width:1087.00px;overflow:hidden"><span style="color:#b0b8f3">import</span><span style="color:#e8e4ef"> </span><span style="color:#e096e3">styles</span><span style="color:#e8e4ef"> </span><span style="color:#b0b8f3">from</span><span style="color:#e8e4ef"> </span><span style="color:#e8e4ef">&quot;</span><span style="color:#a8e39c">./header.module.css</span><span style="color:#e8e4ef">&quot;</span><span style="color:#e8e4ef">;</span></div>
<div class="m ln" style="left:613.01px;top:386.06px;color:#9c92b5">7</div>
<div class="m" style="left:670.50px;top:386.06px;width:1087.00px;overflow:hidden"><span style="color:#b0b8f3">import</span><span style="color:#e8e4ef"> </span><span style="color:#e096e3">MainMenu</span><span style="color:#e8e4ef"> </span><span style="color:#b0b8f3">from</span><span style="color:#e8e4ef"> </span><span style="color:#e8e4ef">&quot;</span><span style="color:#a8e39c">./main-menu</span><span style="color:#e8e4ef">&quot;</span><span style="color:#e8e4ef">;</span></div>
<div class="m ln" style="left:613.01px;top:425.36px;color:#9c92b5">8</div>
<div class="m" style="left:670.50px;top:425.36px;width:1087.00px;overflow:hidden"><span style="color:#b0b8f3">import</span><span style="color:#e8e4ef"> <span style="position:relative;top:-2.2px">{</span> </span><span style="color:#a4ede2">navigation</span><span style="color:#e8e4ef"> <span style="position:relative;top:-2.2px">}</span> </span><span style="color:#b0b8f3">from</span><span style="color:#e8e4ef"> </span><span style="color:#e8e4ef">&quot;</span><span style="color:#a8e39c">../lib/navigation</span><span style="color:#e8e4ef">&quot;</span><span style="color:#e8e4ef">;</span></div>
<div class="m ln" style="left:613.01px;top:464.66px;color:#9c92b5">9</div>
<div class="m ln" style="left:598.72px;top:503.96px;color:#f3f0f8">10</div>
<div class="m" style="left:670.50px;top:503.96px;width:1087.00px;overflow:hidden"><span style="color:#b0b8f3">export</span><span style="color:#e8e4ef"> </span><span style="color:#b0b8f3">default</span><span style="color:#e8e4ef"> </span><span style="color:#b0b8f3">function</span><span style="color:#e8e4ef"> </span><span style="color:#ef6fa6">Header</span><span style="color:#e8e4ef"><span style="position:relative;top:-2.2px">()</span> </span><span style="color:#e8e4ef"><span style="position:relative;top:-2.2px">{</span></span></div>
<div class="m ln" style="left:598.72px;top:543.26px;color:#9c92b5">11</div>
<div class="m" style="left:699.08px;top:543.26px;width:1058.42px;overflow:hidden"><span style="color:#ef6fa6">useEffect</span><span style="color:#f0dc84"><span style="position:relative;top:-2.2px">(</span></span><span style="color:#ef6fa6"><span style="position:relative;top:-2.2px">()</span></span><span style="color:#e8e4ef"> </span><span style="display:inline-block;width:28.58px;height:10px;position:relative;vertical-align:baseline"><svg style="left:0.5px;top:-5.4px" width="27" height="15" viewBox="0 0 27 15"><g fill="none" stroke="#b0b8f3" stroke-width="1.8"><path d="M1 4 H21 M1 11 H21"/><path d="M16 0.8 L25.3 7.5 L16 14.2"/></g></svg></span><span style="color:#e8e4ef"> </span><span style="color:#ef6fa6"><span style="position:relative;top:-2.2px">{</span></span></div>
<div class="m ln" style="left:598.72px;top:582.56px;color:#9c92b5">12</div>
<div class="m" style="left:727.66px;top:582.56px;width:1029.84px;overflow:hidden"><span style="color:#a4ede2">window</span><span style="color:#e8e4ef">.</span><span style="color:#ef6fa6">onscroll</span><span style="color:#e8e4ef"> </span><span style="color:#b0b8f3">=</span><span style="color:#e8e4ef"> </span><span style="color:#b0b8f3">function</span><span style="color:#e8e4ef"><span style="position:relative;top:-2.2px">()</span> <span style="position:relative;top:-2.2px">{</span></span></div>
<div class="m ln" style="left:598.72px;top:621.86px;color:#9c92b5">13</div>
<div class="m" style="left:756.24px;top:621.86px;width:1001.26px;overflow:hidden"><span style="color:#b0b8f3">const</span><span style="color:#e8e4ef"> </span><span style="color:#e096e3">nav</span><span style="color:#e8e4ef"> </span><span style="color:#b0b8f3">=</span><span style="color:#e8e4ef"> </span><span style="color:#a4ede2">document</span><span style="color:#e8e4ef">.</span><span style="color:#ef6fa6">getElementById</span><span style="color:#ef6fa6"><span style="position:relative;top:-2.2px">(</span></span><span style="color:#e8e4ef">&quot;</span><span style="color:#a8e39c">navigator</span><span style="color:#e8e4ef">&quot;</span><span style="color:#ef6fa6"><span style="position:relative;top:-2.2px">)</span></span><span style="color:#e8e4ef">;</span></div>
<div class="m ln" style="left:598.72px;top:661.16px;color:#9c92b5">14</div>
<div class="m" style="left:756.24px;top:661.16px;width:1001.26px;overflow:hidden"><span style="color:#b0b8f3">if</span><span style="color:#e8e4ef"> </span><span style="color:#ef6fa6"><span style="position:relative;top:-2.2px">(</span></span><span style="color:#a4ede2">window</span><span style="color:#e8e4ef">.</span><span style="color:#e096e3">pageYOffset</span><span style="color:#e8e4ef"> </span><span style="color:#b0b8f3">&gt;</span><span style="color:#e8e4ef"> </span><span style="color:#e096e3">nav</span><span style="color:#e8e4ef">.</span><span style="color:#f0dc84">offsetTop</span><span style="color:#e8e4ef"> </span><span style="color:#b0b8f3">+</span><span style="color:#e8e4ef"> </span><span style="color:#f0dc84">80</span><span style="color:#ef6fa6"><span style="position:relative;top:-2.2px">)</span></span><span style="color:#e8e4ef"> </span><span style="color:#ef6fa6"><span style="position:relative;top:-2.2px">{</span></span></div>
<div class="m ln" style="left:598.72px;top:700.46px;color:#9c92b5">15</div>
<div class="m" style="left:784.82px;top:700.46px;width:972.68px;overflow:hidden"><span style="color:#e096e3">nav</span><span style="color:#e8e4ef">.</span><span style="color:#f0dc84">classList</span><span style="color:#e8e4ef">.</span><span style="color:#ef6fa6">add</span><span style="color:#e8e4ef"><span style="position:relative;top:-2.2px">(</span></span><span style="color:#e096e3">styles</span><span style="color:#e8e4ef">.</span><span style="color:#a4ede2">stickyHeader</span><span style="color:#e8e4ef"><span style="position:relative;top:-2.2px">)</span>;</span></div>
<div class="m ln" style="left:598.72px;top:739.76px;color:#9c92b5">16</div>
<div class="m" style="left:756.24px;top:739.76px;width:1001.26px;overflow:hidden"><span style="color:#ef6fa6"><span style="position:relative;top:-2.2px">}</span></span><span style="color:#e8e4ef"> </span><span style="color:#b0b8f3">else</span><span style="color:#e8e4ef"> </span><span style="color:#ef6fa6"><span style="position:relative;top:-2.2px">{</span></span></div>
<div class="m ln" style="left:598.72px;top:779.06px;color:#9c92b5">17</div>
<div class="m" style="left:784.82px;top:779.06px;width:972.68px;overflow:hidden"><span style="color:#e096e3">nav</span><span style="color:#e8e4ef">.</span><span style="color:#f0dc84">classList</span><span style="color:#e8e4ef">.</span><span style="color:#ef6fa6">remove</span><span style="color:#e8e4ef"><span style="position:relative;top:-2.2px">(</span></span><span style="color:#e096e3">styles</span><span style="color:#e8e4ef">.</span><span style="color:#a4ede2">stickyHeader</span><span style="color:#e8e4ef"><span style="position:relative;top:-2.2px">)</span>;</span></div>
<div class="m ln" style="left:598.72px;top:818.36px;color:#9c92b5">18</div>
<div class="m" style="left:756.24px;top:818.36px;width:1001.26px;overflow:hidden"><span style="color:#ef6fa6"><span style="position:relative;top:-2.2px">}</span></span></div>
<div class="m ln" style="left:598.72px;top:857.66px;color:#9c92b5">19</div>
<div class="m" style="left:727.66px;top:857.66px;width:1029.84px;overflow:hidden"><span style="color:#e8e4ef"><span style="position:relative;top:-2.2px">}</span></span></div>
<div class="m ln" style="left:598.72px;top:896.96px;color:#9c92b5">20</div>
<div class="m" style="left:699.08px;top:896.96px;width:1058.42px;overflow:hidden"><span style="color:#ef6fa6"><span style="position:relative;top:-2.2px">}</span></span><span style="color:#f0dc84"><span style="position:relative;top:-2.2px">)</span></span><span style="color:#e8e4ef">;</span></div>
<div class="m ln" style="left:598.72px;top:936.26px;color:#9c92b5">21</div>
<div class="m ln" style="left:598.72px;top:975.56px;color:#9c92b5">22</div>
<div class="m" style="left:699.08px;top:975.56px;width:1058.42px;overflow:hidden"><span style="color:#b0b8f3">return</span><span style="color:#e8e4ef"> </span><span style="color:#f0dc84"><span style="position:relative;top:-2.2px">(</span></span></div>
<div class="m ln" style="left:598.72px;top:1014.86px;color:#9c92b5">23</div>
<div class="m" style="left:727.66px;top:1014.86px;width:1029.84px;overflow:hidden"><span style="color:#e8e4ef">&lt;</span><span style="color:#a4ede2">header</span><span style="color:#e8e4ef"> </span><span style="color:#b0b8f3">id=</span><span style="color:#e8e4ef">&quot;</span><span style="color:#a8e39c">navigator</span><span style="color:#e8e4ef">&quot;</span><span style="color:#e8e4ef"> </span><span style="color:#b0b8f3">className=</span><span style="color:#e8e4ef">&quot;</span><span style="color:#a8e39c">group absolute inset-x-0 top-0 z-50</span><span style="color:#e8e4ef">&quot;</span><span style="color:#e8e4ef">&gt;</span></div>
<div class="m ln" style="left:598.72px;top:1054.16px;color:#9c92b5">24</div>
<div class="m" style="left:756.24px;top:1054.16px;width:1001.26px;overflow:hidden"><span style="color:#e8e4ef">&lt;</span><span style="color:#a4ede2">nav</span><span style="color:#e8e4ef"> </span><span style="color:#b0b8f3">className=</span><span style="color:#e8e4ef">&quot;</span><span style="color:#a8e39c">relative z-<span style="position:relative;top:-2.2px">[</span>52<span style="position:relative;top:-2.2px">]</span> flex items-center justify-between p-6 lg:px-8</span><span style="color:#e8e4ef">&quot;</span><span style="color:#e8e4ef"> </span><span style="color:#b0b8f3">aria-label=</span><span style="color:#e8e4ef">&quot;</span><span style="color:#a8e39c">Global</span><span style="color:#e8e4ef">&quot;</span><span style="color:#e8e4ef">&gt;</span></div>
<div class="m ln" style="left:598.72px;top:1093.46px;color:#9c92b5">25</div>
<div class="m" style="left:784.82px;top:1093.46px;width:972.68px;overflow:hidden"><span style="color:#e8e4ef">&lt;</span><span style="color:#a4ede2">div</span><span style="color:#e8e4ef"> </span><span style="color:#b0b8f3">className=</span><span style="color:#e8e4ef">&quot;</span><span style="color:#a8e39c">flex lg:flex-1</span><span style="color:#e8e4ef">&quot;</span><span style="color:#e8e4ef">&gt;</span></div>
<div class="m ln" style="left:598.72px;top:1132.76px;color:#9c92b5">26</div>
<div class="m" style="left:813.40px;top:1132.76px;width:944.10px;overflow:hidden"><span style="color:#e8e4ef">&lt;</span><span style="color:#a4ede2">Link</span><span style="color:#e8e4ef"> </span><span style="color:#b0b8f3">href=</span><span style="color:#e8e4ef">&quot;</span><span style="color:#a8e39c">/</span><span style="color:#e8e4ef">&quot;</span><span style="color:#e8e4ef">&gt;</span></div>
<div class="m ln" style="left:598.72px;top:1172.06px;color:#9c92b5">27</div>
<div class="m" style="left:841.98px;top:1172.06px;width:915.52px;overflow:hidden"><span style="color:#e8e4ef">&lt;</span><span style="color:#a4ede2">Image</span></div>
<div class="m ln" style="left:598.72px;top:1211.36px;color:#9c92b5">28</div>
<div class="m" style="left:870.56px;top:1211.36px;width:886.94px;overflow:hidden"><span style="color:#b0b8f3">className=</span><span style="color:#e8e4ef">&quot;</span><span style="color:#a8e39c">h-8 w-auto inline align-middle</span><span style="color:#e8e4ef">&quot;</span></div>
<div class="m ln" style="left:598.72px;top:1250.66px;color:#9c92b5">29</div>
<div class="m" style="left:870.56px;top:1250.66px;width:886.94px;overflow:hidden"><span style="color:#b0b8f3">src=</span><span style="color:#e8e4ef">&quot;</span><span style="color:#a8e39c">/logo.png</span><span style="color:#e8e4ef">&quot;</span></div>
<div class="r" style="left:670px;top:1259.5px;width:767px;height:19.5px;background:rgba(72,66,94,0.4)"></div>
<div class="r" style="left:1757.8px;top:139px;width:1.2px;height:1140px;background:#1f1b27"></div>
<div class="r" style="left:1766.20px;top:138.90px;width:1.60px;height:3.0px;background:#aba6b6"></div>
<div class="r" style="left:1767.80px;top:138.90px;width:4.80px;height:3.0px;background:#6b9668"></div>
<div class="r" style="left:1774.20px;top:138.90px;width:9.60px;height:3.0px;background:#6b9668"></div>
<div class="r" style="left:1783.80px;top:138.90px;width:1.60px;height:3.0px;background:#aba6b6"></div>
<div class="r" style="left:1785.40px;top:138.90px;width:1.60px;height:3.0px;background:#aba6b6"></div>
<div class="r" style="left:1766.20px;top:148.76px;width:9.60px;height:3.0px;background:#7a82b2"></div>
<div class="r" style="left:1777.40px;top:148.76px;width:1.60px;height:3.0px;background:#aba6b6"></div>
<div class="r" style="left:1780.60px;top:148.76px;width:14.40px;height:3.0px;background:#6ba2a0"></div>
<div class="r" style="left:1796.60px;top:148.76px;width:1.60px;height:3.0px;background:#aba6b6"></div>
<div class="r" style="left:1799.80px;top:148.76px;width:6.40px;height:3.0px;background:#7a82b2"></div>
<div class="r" style="left:1807.80px;top:148.76px;width:1.60px;height:3.0px;background:#aba6b6"></div>
<div class="r" style="left:1809.40px;top:148.76px;width:8.00px;height:3.0px;background:#6b9668"></div>
<div class="r" style="left:1817.40px;top:148.76px;width:1.60px;height:3.0px;background:#aba6b6"></div>
<div class="r" style="left:1819.00px;top:148.76px;width:1.60px;height:3.0px;background:#aba6b6"></div>
<div class="r" style="left:1766.20px;top:153.69px;width:9.60px;height:3.0px;background:#7a82b2"></div>
<div class="r" style="left:1777.40px;top:153.69px;width:6.40px;height:3.0px;background:#a268aa"></div>
<div class="r" style="left:1785.40px;top:153.69px;width:6.40px;height:3.0px;background:#7a82b2"></div>
<div class="r" style="left:1793.40px;top:153.69px;width:1.60px;height:3.0px;background:#aba6b6"></div>
<div class="r" style="left:1795.00px;top:153.69px;width:14.40px;height:3.0px;background:#6b9668"></div>
<div class="r" style="left:1809.40px;top:153.69px;width:1.60px;height:3.0px;background:#aba6b6"></div>
<div class="r" style="left:1811.00px;top:153.69px;width:1.60px;height:3.0px;background:#aba6b6"></div>
<div class="r" style="left:1766.20px;top:158.62px;width:9.60px;height:3.0px;background:#7a82b2"></div>
<div class="r" style="left:1777.40px;top:158.62px;width:8.00px;height:3.0px;background:#a268aa"></div>
<div class="r" style="left:1787.00px;top:158.62px;width:6.40px;height:3.0px;background:#7a82b2"></div>
<div class="r" style="left:1795.00px;top:158.62px;width:1.60px;height:3.0px;background:#aba6b6"></div>
<div class="r" style="left:1796.60px;top:158.62px;width:16.00px;height:3.0px;background:#6b9668"></div>
<div class="r" style="left:1812.60px;top:158.62px;width:1.60px;height:3.0px;background:#aba6b6"></div>
<div class="r" style="left:1814.20px;top:158.62px;width:1.60px;height:3.0px;background:#aba6b6"></div>
<div class="r" style="left:1766.20px;top:163.55px;width:9.60px;height:3.0px;background:#7a82b2"></div>
<div class="r" style="left:1777.40px;top:163.55px;width:9.60px;height:3.0px;background:#a268aa"></div>
<div class="r" style="left:1788.60px;top:163.55px;width:6.40px;height:3.0px;background:#7a82b2"></div>
<div class="r" style="left:1796.60px;top:163.55px;width:1.60px;height:3.0px;background:#aba6b6"></div>
<div class="r" style="left:1798.20px;top:163.55px;width:30.40px;height:3.0px;background:#6b9668"></div>
<div class="r" style="left:1828.60px;top:163.55px;width:1.60px;height:3.0px;background:#aba6b6"></div>
<div class="r" style="left:1830.20px;top:163.55px;width:1.60px;height:3.0px;background:#aba6b6"></div>
<div class="r" style="left:1766.20px;top:168.48px;width:9.60px;height:3.0px;background:#7a82b2"></div>
<div class="r" style="left:1777.40px;top:168.48px;width:12.80px;height:3.0px;background:#a268aa"></div>
<div class="r" style="left:1791.80px;top:168.48px;width:6.40px;height:3.0px;background:#7a82b2"></div>
<div class="r" style="left:1799.80px;top:168.48px;width:1.60px;height:3.0px;background:#aba6b6"></div>
<div class="r" style="left:1801.40px;top:168.48px;width:17.60px;height:3.0px;background:#6b9668"></div>
<div class="r" style="left:1819.00px;top:168.48px;width:1.60px;height:3.0px;background:#aba6b6"></div>
<div class="r" style="left:1820.60px;top:168.48px;width:1.60px;height:3.0px;background:#aba6b6"></div>
<div class="r" style="left:1766.20px;top:173.41px;width:9.60px;height:3.0px;background:#7a82b2"></div>
<div class="r" style="left:1777.40px;top:173.41px;width:1.60px;height:3.0px;background:#aba6b6"></div>
<div class="r" style="left:1780.60px;top:173.41px;width:16.00px;height:3.0px;background:#6ba2a0"></div>
<div class="r" style="left:1798.20px;top:173.41px;width:1.60px;height:3.0px;background:#aba6b6"></div>
<div class="r" style="left:1801.40px;top:173.41px;width:6.40px;height:3.0px;background:#7a82b2"></div>
<div class="r" style="left:1809.40px;top:173.41px;width:1.60px;height:3.0px;background:#aba6b6"></div>
<div class="r" style="left:1811.00px;top:173.41px;width:27.20px;height:3.0px;background:#6b9668"></div>
<div class="r" style="left:1838.20px;top:173.41px;width:1.60px;height:3.0px;background:#aba6b6"></div>
<div class="r" style="left:1839.80px;top:173.41px;width:1.60px;height:3.0px;background:#aba6b6"></div>
<div class="r" style="left:1766.20px;top:183.27px;width:9.60px;height:3.0px;background:#7a82b2"></div>
<div class="r" style="left:1777.40px;top:183.27px;width:11.20px;height:3.0px;background:#7a82b2"></div>
<div class="r" style="left:1790.20px;top:183.27px;width:12.80px;height:3.0px;background:#7a82b2"></div>
<div class="r" style="left:1804.60px;top:183.27px;width:9.60px;height:3.0px;background:#ae557b"></div>
<div class="r" style="left:1814.20px;top:183.27px;width:3.20px;height:3.0px;background:#aba6b6"></div>
<div class="r" style="left:1819.00px;top:183.27px;width:1.60px;height:3.0px;background:#aba6b6"></div>
<div class="r" style="left:1769.40px;top:188.20px;width:14.40px;height:3.0px;background:#ae557b"></div>
<div class="r" style="left:1783.80px;top:188.20px;width:1.60px;height:3.0px;background:#a49552"></div>
<div class="r" style="left:1785.40px;top:188.20px;width:3.20px;height:3.0px;background:#ae557b"></div>
<div class="r" style="left:1790.20px;top:188.20px;width:1.60px;height:3.0px;background:#7a82b2"></div>
<div class="r" style="left:1793.40px;top:188.20px;width:1.60px;height:3.0px;background:#ae557b"></div>
<div class="r" style="left:1772.60px;top:193.13px;width:9.60px;height:3.0px;background:#6ba2a0"></div>
<div class="r" style="left:1782.20px;top:193.13px;width:1.60px;height:3.0px;background:#aba6b6"></div>
<div class="r" style="left:1783.80px;top:193.13px;width:12.80px;height:3.0px;background:#ae557b"></div>
<div class="r" style="left:1798.20px;top:193.13px;width:1.60px;height:3.0px;background:#7a82b2"></div>
<div class="r" style="left:1801.40px;top:193.13px;width:12.80px;height:3.0px;background:#7a82b2"></div>
<div class="r" style="left:1814.20px;top:193.13px;width:3.20px;height:3.0px;background:#aba6b6"></div>
<div class="r" style="left:1819.00px;top:193.13px;width:1.60px;height:3.0px;background:#aba6b6"></div>
<div class="r" style="left:1775.80px;top:198.06px;width:8.00px;height:3.0px;background:#7a82b2"></div>
<div class="r" style="left:1785.40px;top:198.06px;width:4.80px;height:3.0px;background:#a268aa"></div>
<div class="r" style="left:1791.80px;top:198.06px;width:1.60px;height:3.0px;background:#7a82b2"></div>
<div class="r" style="left:1795.00px;top:198.06px;width:12.80px;height:3.0px;background:#6ba2a0"></div>
<div class="r" style="left:1807.80px;top:198.06px;width:1.60px;height:3.0px;background:#aba6b6"></div>
<div class="r" style="left:1809.40px;top:198.06px;width:22.40px;height:3.0px;background:#ae557b"></div>
<div class="r" style="left:1831.80px;top:198.06px;width:1.60px;height:3.0px;background:#ae557b"></div>
<div class="r" style="left:1833.40px;top:198.06px;width:1.60px;height:3.0px;background:#aba6b6"></div>
<div class="r" style="left:1835.00px;top:198.06px;width:14.40px;height:3.0px;background:#6b9668"></div>
<div class="r" style="left:1849.40px;top:198.06px;width:1.60px;height:3.0px;background:#aba6b6"></div>
<div class="r" style="left:1851.00px;top:198.06px;width:1.60px;height:3.0px;background:#ae557b"></div>
<div class="r" style="left:1852.60px;top:198.06px;width:1.60px;height:3.0px;background:#aba6b6"></div>
<div class="r" style="left:1775.80px;top:202.99px;width:3.20px;height:3.0px;background:#7a82b2"></div>
<div class="r" style="left:1780.60px;top:202.99px;width:1.60px;height:3.0px;background:#ae557b"></div>
<div class="r" style="left:1782.20px;top:202.99px;width:9.60px;height:3.0px;background:#6ba2a0"></div>
<div class="r" style="left:1791.80px;top:202.99px;width:1.60px;height:3.0px;background:#aba6b6"></div>
<div class="r" style="left:1793.40px;top:202.99px;width:17.60px;height:3.0px;background:#a268aa"></div>
<div class="r" style="left:1812.60px;top:202.99px;width:1.60px;height:3.0px;background:#7a82b2"></div>
<div class="r" style="left:1815.80px;top:202.99px;width:4.80px;height:3.0px;background:#a268aa"></div>
<div class="r" style="left:1820.60px;top:202.99px;width:1.60px;height:3.0px;background:#aba6b6"></div>
<div class="r" style="left:1822.20px;top:202.99px;width:14.40px;height:3.0px;background:#a49552"></div>
<div class="r" style="left:1838.20px;top:202.99px;width:1.60px;height:3.0px;background:#7a82b2"></div>
<div class="r" style="left:1841.40px;top:202.99px;width:3.20px;height:3.0px;background:#a49552"></div>
<div class="r" style="left:1844.60px;top:202.99px;width:1.60px;height:3.0px;background:#ae557b"></div>
<div class="r" style="left:1847.80px;top:202.99px;width:1.60px;height:3.0px;background:#ae557b"></div>
<div class="r" style="left:1779.00px;top:207.92px;width:4.80px;height:3.0px;background:#a268aa"></div>
<div class="r" style="left:1783.80px;top:207.92px;width:1.60px;height:3.0px;background:#aba6b6"></div>
<div class="r" style="left:1785.40px;top:207.92px;width:14.40px;height:3.0px;background:#a49552"></div>
<div class="r" style="left:1799.80px;top:207.92px;width:1.60px;height:3.0px;background:#aba6b6"></div>
<div class="r" style="left:1801.40px;top:207.92px;width:4.80px;height:3.0px;background:#ae557b"></div>
<div class="r" style="left:1806.20px;top:207.92px;width:1.60px;height:3.0px;background:#aba6b6"></div>
<div class="r" style="left:1807.80px;top:207.92px;width:9.60px;height:3.0px;background:#a268aa"></div>
<div class="r" style="left:1817.40px;top:207.92px;width:1.60px;height:3.0px;background:#aba6b6"></div>
<div class="r" style="left:1819.00px;top:207.92px;width:19.20px;height:3.0px;background:#6ba2a0"></div>
<div class="r" style="left:1838.20px;top:207.92px;width:3.20px;height:3.0px;background:#aba6b6"></div>
<div class="r" style="left:1775.80px;top:212.85px;width:1.60px;height:3.0px;background:#ae557b"></div>
<div class="r" style="left:1779.00px;top:212.85px;width:6.40px;height:3.0px;background:#7a82b2"></div>
<div class="r" style="left:1787.00px;top:212.85px;width:1.60px;height:3.0px;background:#ae557b"></div>
<div class="r" style="left:1779.00px;top:217.78px;width:4.80px;height:3.0px;background:#a268aa"></div>
<div class="r" style="left:1783.80px;top:217.78px;width:1.60px;height:3.0px;background:#aba6b6"></div>
<div class="r" style="left:1785.40px;top:217.78px;width:14.40px;height:3.0px;background:#a49552"></div>
<div class="r" style="left:1799.80px;top:217.78px;width:1.60px;height:3.0px;background:#aba6b6"></div>
<div class="r" style="left:1801.40px;top:217.78px;width:9.60px;height:3.0px;background:#ae557b"></div>
<div class="r" style="left:1811.00px;top:217.78px;width:1.60px;height:3.0px;background:#aba6b6"></div>
<div class="r" style="left:1812.60px;top:217.78px;width:9.60px;height:3.0px;background:#a268aa"></div>
<div class="r" style="left:1822.20px;top:217.78px;width:1.60px;height:3.0px;background:#aba6b6"></div>
<div class="r" style="left:1823.80px;top:217.78px;width:19.20px;height:3.0px;background:#6ba2a0"></div>
<div class="r" style="left:1843.00px;top:217.78px;width:3.20px;height:3.0px;background:#aba6b6"></div>
<div class="r" style="left:1775.80px;top:222.71px;width:1.60px;height:3.0px;background:#ae557b"></div>
<div class="r" style="left:1772.60px;top:227.64px;width:1.60px;height:3.0px;background:#aba6b6"></div>
<div class="r" style="left:1769.40px;top:232.57px;width:1.60px;height:3.0px;background:#ae557b"></div>
<div class="r" style="left:1771.00px;top:232.57px;width:1.60px;height:3.0px;background:#a49552"></div>
<div class="r" style="left:1772.60px;top:232.57px;width:1.60px;height:3.0px;background:#aba6b6"></div>
<div class="r" style="left:1769.40px;top:242.43px;width:9.60px;height:3.0px;background:#7a82b2"></div>
<div class="r" style="left:1780.60px;top:242.43px;width:1.60px;height:3.0px;background:#a49552"></div>
<div class="r" style="left:1772.60px;top:247.36px;width:1.60px;height:3.0px;background:#aba6b6"></div>
<div class="r" style="left:1774.20px;top:247.36px;width:9.60px;height:3.0px;background:#6ba2a0"></div>
<div class="r" style="left:1785.40px;top:247.36px;width:4.80px;height:3.0px;background:#7a82b2"></div>
<div class="r" style="left:1790.20px;top:247.36px;width:1.60px;height:3.0px;background:#aba6b6"></div>
<div class="r" style="left:1791.80px;top:247.36px;width:14.40px;height:3.0px;background:#6b9668"></div>
<div class="r" style="left:1806.20px;top:247.36px;width:1.60px;height:3.0px;background:#aba6b6"></div>
<div class="r" style="left:1809.40px;top:247.36px;width:16.00px;height:3.0px;background:#7a82b2"></div>
<div class="r" style="left:1825.40px;top:247.36px;width:1.60px;height:3.0px;background:#aba6b6"></div>
<div class="r" style="left:1827.00px;top:247.36px;width:8.00px;height:3.0px;background:#6b9668"></div>
<div class="r" style="left:1836.60px;top:247.36px;width:12.80px;height:3.0px;background:#6b9668"></div>
<div class="r" style="left:1851.00px;top:247.36px;width:14.40px;height:3.0px;background:#6b9668"></div>
<div class="r" style="left:1867.00px;top:247.36px;width:8.00px;height:3.0px;background:#6b9668"></div>
<div class="r" style="left:1876.60px;top:247.36px;width:6.40px;height:3.0px;background:#6b9668"></div>
<div class="r" style="left:1883.00px;top:247.36px;width:1.60px;height:3.0px;background:#aba6b6"></div>
<div class="r" style="left:1884.60px;top:247.36px;width:1.60px;height:3.0px;background:#aba6b6"></div>
<div class="r" style="left:1775.80px;top:252.29px;width:1.60px;height:3.0px;background:#aba6b6"></div>
<div class="r" style="left:1777.40px;top:252.29px;width:4.80px;height:3.0px;background:#6ba2a0"></div>
<div class="r" style="left:1783.80px;top:252.29px;width:16.00px;height:3.0px;background:#7a82b2"></div>
<div class="r" style="left:1799.80px;top:252.29px;width:1.60px;height:3.0px;background:#aba6b6"></div>
<div class="r" style="left:1801.40px;top:252.29px;width:12.80px;height:3.0px;background:#6b9668"></div>
<div class="r" style="left:1815.80px;top:252.29px;width:9.60px;height:3.0px;background:#6b9668"></div>
<div class="r" style="left:1827.00px;top:252.29px;width:6.40px;height:3.0px;background:#6b9668"></div>
<div class="r" style="left:1835.00px;top:252.29px;width:19.20px;height:3.0px;background:#6b9668"></div>
<div class="r" style="left:1855.80px;top:252.29px;width:24.00px;height:3.0px;background:#6b9668"></div>
<div class="r" style="left:1881.40px;top:252.29px;width:4.80px;height:3.0px;background:#6b9668"></div>
<div class="r" style="left:1887.80px;top:252.29px;width:9.20px;height:3.0px;background:#6b9668"></div>
<div class="r" style="left:1779.00px;top:257.22px;width:1.60px;height:3.0px;background:#aba6b6"></div>
<div class="r" style="left:1780.60px;top:257.22px;width:4.80px;height:3.0px;background:#6ba2a0"></div>
<div class="r" style="left:1787.00px;top:257.22px;width:16.00px;height:3.0px;background:#7a82b2"></div>
<div class="r" style="left:1803.00px;top:257.22px;width:1.60px;height:3.0px;background:#aba6b6"></div>
<div class="r" style="left:1804.60px;top:257.22px;width:6.40px;height:3.0px;background:#6b9668"></div>
<div class="r" style="left:1812.60px;top:257.22px;width:14.40px;height:3.0px;background:#6b9668"></div>
<div class="r" style="left:1827.00px;top:257.22px;width:1.60px;height:3.0px;background:#aba6b6"></div>
<div class="r" style="left:1828.60px;top:257.22px;width:1.60px;height:3.0px;background:#aba6b6"></div>
<div class="r" style="left:1782.20px;top:262.15px;width:1.60px;height:3.0px;background:#aba6b6"></div>
<div class="r" style="left:1783.80px;top:262.15px;width:6.40px;height:3.0px;background:#6ba2a0"></div>
<div class="r" style="left:1791.80px;top:262.15px;width:8.00px;height:3.0px;background:#7a82b2"></div>
<div class="r" style="left:1799.80px;top:262.15px;width:1.60px;height:3.0px;background:#aba6b6"></div>
<div class="r" style="left:1801.40px;top:262.15px;width:1.60px;height:3.0px;background:#6b9668"></div>
<div class="r" style="left:1803.00px;top:262.15px;width:1.60px;height:3.0px;background:#aba6b6"></div>
<div class="r" style="left:1804.60px;top:262.15px;width:1.60px;height:3.0px;background:#aba6b6"></div>
<div class="r" style="left:1785.40px;top:267.08px;width:1.60px;height:3.0px;background:#aba6b6"></div>
<div class="r" style="left:1787.00px;top:267.08px;width:8.00px;height:3.0px;background:#6ba2a0"></div>
<div class="r" style="left:1788.60px;top:272.01px;width:16.00px;height:3.0px;background:#7a82b2"></div>
<div class="r" style="left:1804.60px;top:272.01px;width:1.60px;height:3.0px;background:#aba6b6"></div>
<div class="r" style="left:1806.20px;top:272.01px;width:4.80px;height:3.0px;background:#6b9668"></div>
<div class="r" style="left:1812.60px;top:272.01px;width:9.60px;height:3.0px;background:#6b9668"></div>
<div class="r" style="left:1823.80px;top:272.01px;width:9.60px;height:3.0px;background:#6b9668"></div>
<div class="r" style="left:1835.00px;top:272.01px;width:19.20px;height:3.0px;background:#6b9668"></div>
<div class="r" style="left:1854.20px;top:272.01px;width:1.60px;height:3.0px;background:#aba6b6"></div>
<div class="r" style="left:1788.60px;top:276.94px;width:6.40px;height:3.0px;background:#7a82b2"></div>
<div class="r" style="left:1795.00px;top:276.94px;width:1.60px;height:3.0px;background:#aba6b6"></div>
<div class="r" style="left:1796.60px;top:276.94px;width:14.40px;height:3.0px;background:#6b9668"></div>
<div class="r" style="left:1811.00px;top:276.94px;width:1.60px;height:3.0px;background:#aba6b6"></div>
<div class="r" style="left:1788.60px;top:281.87px;width:6.40px;height:3.0px;background:#7a82b2"></div>
<div class="r" style="left:1795.00px;top:281.87px;width:3.20px;height:3.0px;background:#aba6b6"></div>
<div class="r" style="left:1788.60px;top:286.80px;width:9.60px;height:3.0px;background:#7a82b2"></div>
<div class="r" style="left:1798.20px;top:286.80px;width:1.60px;height:3.0px;background:#aba6b6"></div>
<div class="r" style="left:1799.80px;top:286.80px;width:3.20px;height:3.0px;background:#a49552"></div>
<div class="r" style="left:1803.00px;top:286.80px;width:1.60px;height:3.0px;background:#aba6b6"></div>
<div class="r" style="left:1788.60px;top:291.73px;width:11.20px;height:3.0px;background:#7a82b2"></div>
<div class="r" style="left:1799.80px;top:291.73px;width:1.60px;height:3.0px;background:#aba6b6"></div>
<div class="r" style="left:1801.40px;top:291.73px;width:3.20px;height:3.0px;background:#a49552"></div>
<div class="r" style="left:1804.60px;top:291.73px;width:1.60px;height:3.0px;background:#aba6b6"></div>
<div class="r" style="left:1785.40px;top:296.66px;width:3.20px;height:3.0px;background:#aba6b6"></div>
<div class="r" style="left:1785.40px;top:301.59px;width:1.60px;height:3.0px;background:#aba6b6"></div>
<div class="r" style="left:1787.00px;top:301.59px;width:6.40px;height:3.0px;background:#6ba2a0"></div>
<div class="r" style="left:1795.00px;top:301.59px;width:17.60px;height:3.0px;background:#7a82b2"></div>
<div class="r" style="left:1812.60px;top:301.59px;width:16.00px;height:3.0px;background:#6b9668"></div>
<div class="r" style="left:1830.20px;top:301.59px;width:19.20px;height:3.0px;background:#6b9668"></div>
<div class="r" style="left:1851.00px;top:301.59px;width:12.80px;height:3.0px;background:#6b9668"></div>
<div class="r" style="left:1865.40px;top:301.59px;width:14.40px;height:3.0px;background:#6b9668"></div>
<div class="r" style="left:1883.00px;top:301.59px;width:6.40px;height:3.0px;background:#6b9668"></div>
<div class="r" style="left:1891.00px;top:301.59px;width:6.00px;height:3.0px;background:#6b9668"></div>
<div class="r" style="left:1782.20px;top:306.52px;width:3.20px;height:3.0px;background:#aba6b6"></div>
<div class="r" style="left:1785.40px;top:306.52px;width:6.40px;height:3.0px;background:#6ba2a0"></div>
<div class="r" style="left:1791.80px;top:306.52px;width:1.60px;height:3.0px;background:#aba6b6"></div>
<div class="r" style="left:1779.00px;top:311.45px;width:3.20px;height:3.0px;background:#aba6b6"></div>
<div class="r" style="left:1782.20px;top:311.45px;width:4.80px;height:3.0px;background:#6ba2a0"></div>
<div class="r" style="left:1787.00px;top:311.45px;width:1.60px;height:3.0px;background:#aba6b6"></div>
<div class="r" style="left:1779.00px;top:316.38px;width:1.60px;height:3.0px;background:#aba6b6"></div>
<div class="r" style="left:1780.60px;top:316.38px;width:4.80px;height:3.0px;background:#6ba2a0"></div>
<div class="r" style="left:1787.00px;top:316.38px;width:16.00px;height:3.0px;background:#7a82b2"></div>
<div class="r" style="left:1803.00px;top:316.38px;width:1.60px;height:3.0px;background:#aba6b6"></div>
<div class="r" style="left:1804.60px;top:316.38px;width:6.40px;height:3.0px;background:#6b9668"></div>
<div class="r" style="left:1812.60px;top:316.38px;width:14.40px;height:3.0px;background:#6b9668"></div>
<div class="r" style="left:1827.00px;top:316.38px;width:3.20px;height:3.0px;background:#aba6b6"></div>
<div class="r" style="left:1782.20px;top:321.31px;width:1.60px;height:3.0px;background:#aba6b6"></div>
<div class="r" style="left:1783.80px;top:321.31px;width:12.80px;height:3.0px;background:#6ba2a0"></div>
<div class="r" style="left:1798.20px;top:321.31px;width:3.20px;height:3.0px;background:#aba6b6"></div>
<div class="r" style="left:1779.00px;top:326.24px;width:3.20px;height:3.0px;background:#aba6b6"></div>
<div class="r" style="left:1782.20px;top:326.24px;width:4.80px;height:3.0px;background:#6ba2a0"></div>
<div class="r" style="left:1787.00px;top:326.24px;width:1.60px;height:3.0px;background:#aba6b6"></div>
<div class="r" style="left:1779.00px;top:331.17px;width:1.60px;height:3.0px;background:#aba6b6"></div>
<div class="r" style="left:1780.60px;top:331.17px;width:4.80px;height:3.0px;background:#6ba2a0"></div>
<div class="r" style="left:1787.00px;top:331.17px;width:16.00px;height:3.0px;background:#7a82b2"></div>
<div class="r" style="left:1803.00px;top:331.17px;width:1.60px;height:3.0px;background:#aba6b6"></div>
<div class="r" style="left:1804.60px;top:331.17px;width:12.80px;height:3.0px;background:#6b9668"></div>
<div class="r" style="left:1819.00px;top:331.17px;width:9.60px;height:3.0px;background:#6b9668"></div>
<div class="r" style="left:1830.20px;top:331.17px;width:17.60px;height:3.0px;background:#6b9668"></div>
<div class="r" style="left:1847.80px;top:331.17px;width:3.20px;height:3.0px;background:#aba6b6"></div>
<div class="r" style="left:1782.20px;top:336.10px;width:1.60px;height:3.0px;background:#aba6b6"></div>
<div class="r" style="left:1783.80px;top:336.10px;width:16.00px;height:3.0px;background:#a268aa"></div>
<div class="r" style="left:1799.80px;top:336.10px;width:6.40px;height:3.0px;background:#ae557b"></div>
<div class="r" style="left:1806.20px;top:336.10px;width:3.20px;height:3.0px;background:#aba6b6"></div>
<div class="r" style="left:1809.40px;top:336.10px;width:8.00px;height:3.0px;background:#a49552"></div>
<div class="r" style="left:1817.40px;top:336.10px;width:1.60px;height:3.0px;background:#aba6b6"></div>
<div class="r" style="left:1820.60px;top:336.10px;width:3.20px;height:3.0px;background:#7a82b2"></div>
<div class="r" style="left:1823.80px;top:336.10px;width:1.60px;height:3.0px;background:#aba6b6"></div>
<div class="r" style="left:1785.40px;top:341.03px;width:1.60px;height:3.0px;background:#aba6b6"></div>
<div class="r" style="left:1787.00px;top:341.03px;width:6.40px;height:3.0px;background:#6ba2a0"></div>
<div class="r" style="left:1795.00px;top:341.03px;width:6.40px;height:3.0px;background:#7a82b2"></div>
<div class="r" style="left:1801.40px;top:341.03px;width:1.60px;height:3.0px;background:#aba6b6"></div>
<div class="r" style="left:1803.00px;top:341.03px;width:6.40px;height:3.0px;background:#a49552"></div>
<div class="r" style="left:1809.40px;top:341.03px;width:1.60px;height:3.0px;background:#aba6b6"></div>
<div class="r" style="left:1811.00px;top:341.03px;width:6.40px;height:3.0px;background:#a268aa"></div>
<div class="r" style="left:1817.40px;top:341.03px;width:1.60px;height:3.0px;background:#aba6b6"></div>
<div class="r" style="left:1820.60px;top:341.03px;width:6.40px;height:3.0px;background:#7a82b2"></div>
<div class="r" style="left:1827.00px;top:341.03px;width:1.60px;height:3.0px;background:#aba6b6"></div>
<div class="r" style="left:1828.60px;top:341.03px;width:6.40px;height:3.0px;background:#a49552"></div>
<div class="r" style="left:1835.00px;top:341.03px;width:1.60px;height:3.0px;background:#aba6b6"></div>
<div class="r" style="left:1836.60px;top:341.03px;width:6.40px;height:3.0px;background:#a268aa"></div>
<div class="r" style="left:1843.00px;top:341.03px;width:1.60px;height:3.0px;background:#aba6b6"></div>
<div class="r" style="left:1846.20px;top:341.03px;width:16.00px;height:3.0px;background:#7a82b2"></div>
<div class="r" style="left:1862.20px;top:341.03px;width:19.20px;height:3.0px;background:#6b9668"></div>
<div class="r" style="left:1884.60px;top:341.03px;width:12.40px;height:3.0px;background:#6b9668"></div>
<div class="r" style="left:1788.60px;top:345.96px;width:1.60px;height:3.0px;background:#aba6b6"></div>
<div class="r" style="left:1790.20px;top:345.96px;width:6.40px;height:3.0px;background:#a49552"></div>
<div class="r" style="left:1796.60px;top:345.96px;width:1.60px;height:3.0px;background:#aba6b6"></div>
<div class="r" style="left:1798.20px;top:345.96px;width:6.40px;height:3.0px;background:#a268aa"></div>
<div class="r" style="left:1804.60px;top:345.96px;width:1.60px;height:3.0px;background:#aba6b6"></div>
<div class="r" style="left:1785.40px;top:350.89px;width:3.20px;height:3.0px;background:#aba6b6"></div>
<div class="r" style="left:1788.60px;top:350.89px;width:6.40px;height:3.0px;background:#6ba2a0"></div>
<div class="r" style="left:1795.00px;top:350.89px;width:1.60px;height:3.0px;background:#aba6b6"></div>
<div class="r" style="left:1782.20px;top:355.82px;width:4.80px;height:3.0px;background:#aba6b6"></div>
<div class="r" style="left:1779.00px;top:360.75px;width:3.20px;height:3.0px;background:#aba6b6"></div>
<div class="r" style="left:1782.20px;top:360.75px;width:4.80px;height:3.0px;background:#6ba2a0"></div>
<div class="r" style="left:1787.00px;top:360.75px;width:1.60px;height:3.0px;background:#aba6b6"></div>
<div class="r" style="left:1779.00px;top:365.68px;width:1.60px;height:3.0px;background:#aba6b6"></div>
<div class="r" style="left:1780.60px;top:365.68px;width:4.80px;height:3.0px;background:#6ba2a0"></div>
<div class="r" style="left:1787.00px;top:365.68px;width:16.00px;height:3.0px;background:#7a82b2"></div>
<div class="r" style="left:1803.00px;top:365.68px;width:1.60px;height:3.0px;background:#aba6b6"></div>
<div class="r" style="left:1804.60px;top:365.68px;width:9.60px;height:3.0px;background:#6b9668"></div>
<div class="r" style="left:1817.40px;top:365.68px;width:11.20px;height:3.0px;background:#6b9668"></div>
<div class="r" style="left:1830.20px;top:365.68px;width:14.40px;height:3.0px;background:#6b9668"></div>
<div class="r" style="left:1846.20px;top:365.68px;width:22.40px;height:3.0px;background:#6b9668"></div>
<div class="r" style="left:1868.60px;top:365.68px;width:3.20px;height:3.0px;background:#aba6b6"></div>
<div class="r" style="left:1782.20px;top:370.61px;width:1.60px;height:3.0px;background:#aba6b6"></div>
<div class="r" style="left:1783.80px;top:370.61px;width:1.60px;height:3.0px;background:#6ba2a0"></div>
<div class="r" style="left:1787.00px;top:370.61px;width:8.00px;height:3.0px;background:#7a82b2"></div>
<div class="r" style="left:1795.00px;top:370.61px;width:1.60px;height:3.0px;background:#aba6b6"></div>
<div class="r" style="left:1796.60px;top:370.61px;width:49.60px;height:3.0px;background:#6b9668"></div>
<div class="r" style="left:1846.20px;top:370.61px;width:1.60px;height:3.0px;background:#aba6b6"></div>
<div class="r" style="left:1847.80px;top:370.61px;width:11.20px;height:3.0px;background:#7a82b2"></div>
<div class="r" style="left:1859.00px;top:370.61px;width:1.60px;height:3.0px;background:#aba6b6"></div>
<div class="r" style="left:1860.60px;top:370.61px;width:11.20px;height:3.0px;background:#6b9668"></div>
<div class="r" style="left:1871.80px;top:370.61px;width:1.60px;height:3.0px;background:#aba6b6"></div>
<div class="r" style="left:1785.40px;top:375.54px;width:1.60px;height:3.0px;background:#aba6b6"></div>
<div class="r" style="left:1787.00px;top:375.54px;width:4.80px;height:3.0px;background:#6ba2a0"></div>
<div class="r" style="left:1793.40px;top:375.54px;width:16.00px;height:3.0px;background:#7a82b2"></div>
<div class="r" style="left:1809.40px;top:375.54px;width:1.60px;height:3.0px;background:#aba6b6"></div>
<div class="r" style="left:1811.00px;top:375.54px;width:11.20px;height:3.0px;background:#6b9668"></div>
<div class="r" style="left:1825.40px;top:375.54px;width:8.00px;height:3.0px;background:#7a82b2"></div>
<div class="r" style="left:1833.40px;top:375.54px;width:1.60px;height:3.0px;background:#aba6b6"></div>
<div class="r" style="left:1835.00px;top:375.54px;width:9.60px;height:3.0px;background:#6b9668"></div>
<div class="r" style="left:1846.20px;top:375.54px;width:9.60px;height:3.0px;background:#6b9668"></div>
<div class="r" style="left:1857.40px;top:375.54px;width:8.00px;height:3.0px;background:#6b9668"></div>
<div class="r" style="left:1867.00px;top:375.54px;width:6.40px;height:3.0px;background:#7a82b2"></div>
<div class="r" style="left:1873.40px;top:375.54px;width:1.60px;height:3.0px;background:#aba6b6"></div>
<div class="r" style="left:1875.00px;top:375.54px;width:22.00px;height:3.0px;background:#6b9668"></div>
<div class="r" style="left:1782.20px;top:380.47px;width:3.20px;height:3.0px;background:#aba6b6"></div>
<div class="r" style="left:1785.40px;top:380.47px;width:1.60px;height:3.0px;background:#6ba2a0"></div>
<div class="r" style="left:1787.00px;top:380.47px;width:1.60px;height:3.0px;background:#aba6b6"></div>
<div class="r" style="left:1779.00px;top:385.40px;width:3.20px;height:3.0px;background:#aba6b6"></div>
<div class="r" style="left:1782.20px;top:385.40px;width:4.80px;height:3.0px;background:#6ba2a0"></div>
<div class="r" style="left:1787.00px;top:385.40px;width:1.60px;height:3.0px;background:#aba6b6"></div>
<div class="r" style="left:1775.80px;top:390.33px;width:3.20px;height:3.0px;background:#aba6b6"></div>
<div class="r" style="left:1779.00px;top:390.33px;width:4.80px;height:3.0px;background:#6ba2a0"></div>
<div class="r" style="left:1783.80px;top:390.33px;width:1.60px;height:3.0px;background:#aba6b6"></div>
<div class="r" style="left:1772.60px;top:395.26px;width:3.20px;height:3.0px;background:#aba6b6"></div>
<div class="r" style="left:1775.80px;top:395.26px;width:9.60px;height:3.0px;background:#6ba2a0"></div>
<div class="r" style="left:1785.40px;top:395.26px;width:1.60px;height:3.0px;background:#aba6b6"></div>
<div class="r" style="left:1769.40px;top:400.19px;width:3.20px;height:3.0px;background:#aba6b6"></div>
<div class="r" style="left:1766.20px;top:405.12px;width:1.60px;height:3.0px;background:#aba6b6"></div>
<div class="r" style="left:1897px;top:139px;width:1px;height:1140px;background:#3a3546"></div>
<div class="r" style="left:1898px;top:139px;width:22px;height:393px;background:#342f43"></div>
<div class="r" style="left:1898px;top:259.5px;width:22px;height:3.3px;background:#6b6579"></div>
<div class="r" style="left:1905px;top:262px;width:7.7px;height:11.8px;background:#6b6579"></div>
<div class="r" style="left:1905px;top:871px;width:8px;height:14.2px;background:#a29cb0"></div>
<div class="r" style="left:0;top:1279px;width:56px;height:36px;background:#e863a6"></div>
<svg style="left:18px;top:1285px" width="22" height="24" viewBox="0 0 22 24"><path d="M3.2 8.5 L9.7 14.3 L3.2 20.6 M16.2 2.6 L10.4 8.6 L16.2 14.6" fill="none" stroke="#231e2b" stroke-width="1.7" stroke-linecap="round"/></svg>
<svg style="left:70px;top:1285px" width="20" height="25" viewBox="0 0 20 25"><g fill="none" stroke="#e3dfec" stroke-width="1.8"><circle cx="4" cy="4" r="3"/><circle cx="16" cy="9.5" r="3"/><circle cx="4" cy="20.5" r="3"/><line x1="4" y1="7" x2="4" y2="17.5"/><path d="M4 16.5 C5 13.5 8 13.5 11 13.5 C14 13.5 16 13 16 12.5"/></g></svg>
<div class="t" style="left:97.6px;top:1286.94px;font-size:20.5px;color:#e3dfec;font-weight:normal;letter-spacing:0px;-webkit-text-stroke:0.3px #e3dfec;">main*</div>
<svg style="left:176px;top:1287px" width="26" height="22" viewBox="0 0 26 22"><g fill="none" stroke="#e3dfec" stroke-width="1.8"><path d="M4 10 A9 8.5 0 0 1 21 7"/><path d="M22 12 A9 8.5 0 0 1 5 15"/><path d="M17 6.5 L21.5 7.5 L22.5 3"/><path d="M9 15.5 L4.5 14.5 L3.5 19"/></g></svg>
<svg style="left:227px;top:1286px" width="22" height="22" viewBox="0 0 22 22"><g fill="none" stroke="#e3dfec" stroke-width="1.7"><circle cx="10.5" cy="10.5" r="9.3"/><path d="M6.5 6.5 L14.5 14.5 M14.5 6.5 L6.5 14.5"/></g></svg>
<div class="t" style="left:254.5px;top:1286.52px;font-size:21px;color:#e3dfec;font-weight:normal;letter-spacing:0px;-webkit-text-stroke:0.3px #e3dfec;">0</div>
<svg style="left:273px;top:1286px" width="23" height="22" viewBox="0 0 23 22"><g fill="none" stroke="#e3dfec" stroke-width="1.7" stroke-linejoin="round"><path d="M11 1.5 L21 20 H1 Z"/></g><rect x="10" y="7.5" width="2" height="6.5" fill="#e3dfec"/><rect x="10" y="15.5" width="2" height="2" fill="#e3dfec"/></svg>
<div class="t" style="left:301.5px;top:1286.52px;font-size:21px;color:#e3dfec;font-weight:normal;letter-spacing:0px;-webkit-text-stroke:0.3px #e3dfec;">0</div>
<div class="t" style="left:1052px;top:1286.52px;font-size:21px;color:#e3dfec;font-weight:normal;letter-spacing:0px;-webkit-text-stroke:0.3px #e3dfec;">Ln 10, Col 35</div>
<div class="t" style="left:1203.8px;top:1286.52px;font-size:21px;color:#e3dfec;font-weight:normal;letter-spacing:0px;-webkit-text-stroke:0.3px #e3dfec;">Spaces: 2</div>
<div class="t" style="left:1321.5px;top:1286.52px;font-size:21px;color:#e3dfec;font-weight:normal;letter-spacing:0px;-webkit-text-stroke:0.3px #e3dfec;">UTF-8</div>
<div class="t" style="left:1408px;top:1286.52px;font-size:21px;color:#e3dfec;font-weight:normal;letter-spacing:0px;-webkit-text-stroke:0.3px #e3dfec;">LF</div>
<svg style="left:1454px;top:1286px" width="24" height="24" viewBox="0 0 24 24"><g fill="none" stroke="#e3dfec" stroke-width="1.6" stroke-linecap="round"><path d="M5 2 C3 2 3 3 3 5 V8 C3 9.5 2.2 10.5 1 10.5 C2.2 10.5 3 11.5 3 13 V16 C3 18 3 19 5 19"/><path d="M13 2 C15 2 15 3 15 5 V9"/><circle cx="16" cy="17" r="4.3"/><path d="M14.3 15.3 L17.7 18.7 M17.7 15.3 L14.3 18.7" stroke-width="1.3"/></g></svg>
<div class="t" style="left:1485.5px;top:1287.03px;font-size:20.4px;color:#e3dfec;font-weight:normal;letter-spacing:0px;-webkit-text-stroke:0.3px #e3dfec;">JavaScript JSX</div>
<svg style="left:1650px;top:1287.5px" width="24" height="22" viewBox="0 0 24 22"><g fill="none" stroke="#e3dfec" stroke-width="1.6"><circle cx="8.2" cy="6.2" r="4.4"/><circle cx="15.8" cy="6.2" r="4.4"/><path d="M4.3 11.5 C1.8 12.5 1 14 1 16 C1 18.8 5.5 20.6 12 20.6 C18.5 20.6 23 18.8 23 16 C23 14 22.2 12.5 19.7 11.5"/><path d="M5 11 V17.5 M19 11 V17.5"/></g><g fill="#e3dfec"><path d="M1.5 14 L4.5 12 V18.5 L2 17.5 Z"/><path d="M22.5 14 L19.5 12 V18.5 L22 17.5 Z"/><rect x="9.1" y="12.8" width="1.7" height="4.6" rx="0.85"/><rect x="13.3" y="12.8" width="1.7" height="4.6" rx="0.85"/></g></svg>
<svg style="left:1699px;top:1288px" width="24" height="20" viewBox="0 0 24 20"><g fill="none" stroke="#e3dfec" stroke-width="1.6"><path d="M0.8 9.5 L5.8 15.5"/><path d="M7.5 10.5 L11.2 15.5 L22.7 2.4"/><path d="M13 9.5 L18.7 3"/></g></svg>
<div class="t" style="left:1728.9px;top:1286.52px;font-size:21px;color:#e3dfec;font-weight:normal;letter-spacing:0px;-webkit-text-stroke:0.3px #e3dfec;">Prettier</div>
<svg style="left:1823px;top:1286px" width="25" height="24" viewBox="0 0 25 24"><g fill="none" stroke="#e3dfec" stroke-width="1.5"><circle cx="8.7" cy="10.4" r="3.9"/><path d="M2 21.5 C2.5 17.5 5 15.8 8.7 15.8 C12.4 15.8 14.9 17.5 15.4 21.5"/><path d="M7.5 5 V1.6 H22 V10.5 H17.5 L15 13 V10.5"/></g></svg>
<svg style="left:1872px;top:1286px" width="22" height="24" viewBox="0 0 22 24"><g fill="none" stroke="#e3dfec" stroke-width="1.6" stroke-linejoin="round"><path d="M11 2 C6.5 2 4.5 5 4.5 9 V14.5 L2.5 18 H19.5 L17.5 14.5 V9 C17.5 5 15.5 2 11 2 Z"/><path d="M8.5 19 C8.5 22 13.5 22 13.5 19"/></g></svg>
</div></body></html>
